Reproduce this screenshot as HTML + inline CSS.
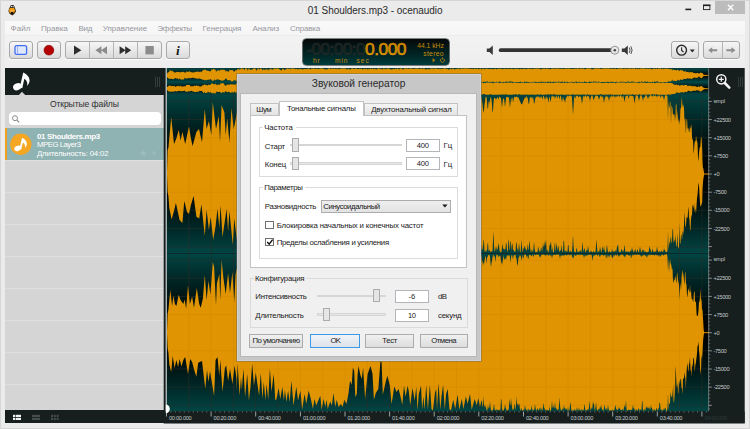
<!DOCTYPE html>
<html lang="ru"><head><meta charset="utf-8"><title>01 Shoulders.mp3 - ocenaudio</title>
<style>
html,body{margin:0;padding:0;}
body{width:750px;height:429px;position:relative;overflow:hidden;background:#ebebeb;font-family:'Liberation Sans',sans-serif;}
.t{position:absolute;white-space:nowrap;}
</style></head><body>
<div style="position:absolute;left:0px;top:0px;width:750px;height:429px;background:#ebebeb;"></div><div style="position:absolute;left:0px;top:0px;width:750px;height:429px;box-sizing:border-box;border:1px solid #d6d6d6;"></div><svg style="position:absolute;left:7px;top:4px" width="11" height="13" viewBox="7 4 11 13"><path d="M9.2 8.2l2-3.2 2.6 0.6 1.4 3 0.8 2.6-1.6 2.8-2.2 1.4-2.6-1.6-1.2-2.8z" fill="#3a2a10"/><ellipse cx="12" cy="10.6" rx="2.9" ry="3" fill="#f39c12"/><ellipse cx="12.2" cy="6.6" rx="2" ry="1.5" fill="#222"/><circle cx="11.4" cy="6.5" r="0.65" fill="#e8eef4"/><circle cx="13.1" cy="6.7" r="0.65" fill="#e8eef4"/><ellipse cx="12.1" cy="13" rx="1.5" ry="1.3" fill="#1a1208"/><path d="M10.8 11h2.6" stroke="#f8d9a0" stroke-width="0.6"/></svg><span class="t" style="left:307.80px;top:2.60px;font-size:10px;line-height:16px;color:#2a2a2a;font-family:'Liberation Sans',sans-serif;letter-spacing:-0.057px;">01 Shoulders.mp3 - ocenaudio</span><div style="position:absolute;left:715px;top:1px;width:30px;height:13px;background:#bcbcbc;"></div><svg style="position:absolute;left:680px;top:0" width="70" height="16" viewBox="680 0 70 16"><path d="M727.9 4.8l5.4 5.4M733.3 4.8l-5.4 5.4" stroke="#fff" stroke-width="1.3" fill="none"/><rect x="703.5" y="5.2" width="6.4" height="4.4" fill="none" stroke="#222" stroke-width="0.9"/><rect x="703" y="4.6" width="7.4" height="1.5" fill="#222"/><rect x="685.4" y="8.6" width="5.8" height="1.6" fill="#222"/></svg><div style="position:absolute;left:5px;top:20.6px;width:739.6px;height:14px;background:linear-gradient(#f9f9fa,#f5f5f6);"></div><span class="t" style="left:10.50px;top:21.70px;font-size:8px;line-height:13px;color:#98989e;font-family:'Liberation Sans',sans-serif;letter-spacing:0.108px;">Файл</span><span class="t" style="left:40.90px;top:21.70px;font-size:8px;line-height:13px;color:#98989e;font-family:'Liberation Sans',sans-serif;letter-spacing:-0.037px;">Правка</span><span class="t" style="left:78.40px;top:21.70px;font-size:8px;line-height:13px;color:#98989e;font-family:'Liberation Sans',sans-serif;letter-spacing:-0.224px;">Вид</span><span class="t" style="left:102.80px;top:21.70px;font-size:8px;line-height:13px;color:#98989e;font-family:'Liberation Sans',sans-serif;letter-spacing:-0.017px;">Управление</span><span class="t" style="left:157.40px;top:21.70px;font-size:8px;line-height:13px;color:#98989e;font-family:'Liberation Sans',sans-serif;letter-spacing:-0.281px;">Эффекты</span><span class="t" style="left:202.50px;top:21.70px;font-size:8px;line-height:13px;color:#98989e;font-family:'Liberation Sans',sans-serif;letter-spacing:-0.055px;">Генерация</span><span class="t" style="left:252.40px;top:21.70px;font-size:8px;line-height:13px;color:#98989e;font-family:'Liberation Sans',sans-serif;letter-spacing:-0.068px;">Анализ</span><span class="t" style="left:290.00px;top:21.70px;font-size:8px;line-height:13px;color:#98989e;font-family:'Liberation Sans',sans-serif;letter-spacing:-0.198px;">Справка</span><div style="position:absolute;left:5px;top:34.6px;width:739.6px;height:33.4px;background:linear-gradient(#e9e9e9,#f2f2f2 4%,#f0f0f0 50%,#ededed);"></div><div style="position:absolute;left:9px;top:41.4px;width:23.8px;height:17.4px;box-sizing:border-box;border:1px solid #a9a9a9;border-radius:3px;background:linear-gradient(#f6f6f6,#e9e9e9 50%,#dadada);box-shadow:0 1px 0 rgba(255,255,255,.8);"></div><div style="position:absolute;left:37px;top:41.4px;width:23.8px;height:17.4px;box-sizing:border-box;border:1px solid #a9a9a9;border-radius:3px;background:linear-gradient(#f6f6f6,#e9e9e9 50%,#dadada);box-shadow:0 1px 0 rgba(255,255,255,.8);"></div><div style="position:absolute;left:65.2px;top:41.4px;width:96.6px;height:17.4px;box-sizing:border-box;border:1px solid #a9a9a9;border-radius:3px;background:linear-gradient(#f6f6f6,#e9e9e9 50%,#dadada);box-shadow:0 1px 0 rgba(255,255,255,.8);"></div><div style="position:absolute;left:88.8px;top:42.4px;width:1px;height:15.4px;background:#b4b4b4;"></div><div style="position:absolute;left:113.0px;top:42.4px;width:1px;height:15.4px;background:#b4b4b4;"></div><div style="position:absolute;left:137.1px;top:42.4px;width:1px;height:15.4px;background:#b4b4b4;"></div><div style="position:absolute;left:166px;top:41.4px;width:23.6px;height:17.4px;box-sizing:border-box;border:1px solid #a9a9a9;border-radius:3px;background:linear-gradient(#f6f6f6,#e9e9e9 50%,#dadada);box-shadow:0 1px 0 rgba(255,255,255,.8);"></div><div style="position:absolute;left:671px;top:41.4px;width:27.6px;height:17.4px;box-sizing:border-box;border:1px solid #a9a9a9;border-radius:3px;background:linear-gradient(#f6f6f6,#e9e9e9 50%,#dadada);box-shadow:0 1px 0 rgba(255,255,255,.8);"></div><div style="position:absolute;left:703.2px;top:41.4px;width:37px;height:17.4px;box-sizing:border-box;border:1px solid #a9a9a9;border-radius:3px;background:linear-gradient(#f6f6f6,#e9e9e9 50%,#dadada);box-shadow:0 1px 0 rgba(255,255,255,.8);"></div><div style="position:absolute;left:722px;top:42.4px;width:1px;height:15.4px;background:#b4b4b4;"></div><svg style="position:absolute;left:0;top:36px" width="750" height="30" viewBox="0 36 750 30">
<rect x="15" y="45.6" width="11.6" height="8.8" rx="1.6" fill="#dfe8ff" stroke="#3f6df0" stroke-width="1.3"/><line x1="17.6" y1="46.5" x2="17.6" y2="53.5" stroke="#7f9df5" stroke-width="0.8"/>
<circle cx="48.9" cy="50.2" r="4.9" fill="#b40000"/><circle cx="48.9" cy="50.2" r="4.9" fill="none" stroke="#8a0000" stroke-width="0.6"/>
<path d="M74 45.6v9.2l7.4-4.6z" fill="#2e2e2e"/>
<path d="M101.4 46.2v8l-6-4zM107 46.2v8l-6-4z" fill="#8a8a8a"/>
<path d="M119.6 46.2v8l6-4zM125.2 46.2v8l6-4z" fill="#2e2e2e"/>
<rect x="145.4" y="46" width="8.4" height="8.4" fill="#8c8c8c"/>
<circle cx="681.6" cy="50.2" r="4.9" fill="none" stroke="#2a2a2a" stroke-width="1.4"/><path d="M681.6 47.2v3.2l2 1.6" fill="none" stroke="#2a2a2a" stroke-width="1.1"/>
<path d="M689.8 49.6h5l-2.5 2.8z" fill="#2a2a2a"/>
<path d="M708.2 50.2l4-3v2h5v2h-5v2z" fill="#8d8d8d"/>
<path d="M735.4 50.2l-4-3v2h-5v2h5v2z" fill="#8d8d8d"/>
<path d="M486.8 48.4h2.6l3.4-3v9.6l-3.4-3h-2.6z" fill="#3a3a3a"/>
<rect x="498.8" y="48.3" width="114.5" height="3.8" rx="1.9" fill="#333"/>
<circle cx="614.8" cy="50.2" r="4" fill="#e8e8e8" stroke="#8a8a8a" stroke-width="0.9"/><circle cx="614.8" cy="50.2" r="1.3" fill="#444"/>
<path d="M621.8 48.4h2.6l3.4-3v9.6l-3.4-3h-2.6z" fill="#3a3a3a"/><path d="M629.3 47.6q1.6 2.6 0 5.2M630.9 46.4q2.4 3.8 0 7.6" fill="none" stroke="#3a3a3a" stroke-width="0.9"/>
</svg><span class="t" style="left:175.92px;top:39.50px;font-size:13.5px;line-height:21px;color:#1a1a1a;font-family:'Liberation Serif',serif;font-weight:bold;font-style:italic;">i</span><div style="position:absolute;left:302.5px;top:38.7px;width:146px;height:26.3px;border-radius:3.5px;background:linear-gradient(#050808,#012222 55%,#013c3c);box-shadow:0 0 0 0.6px #0b1212;"></div><span class="t" style="left:306.40px;top:35.60px;font-size:17.4px;line-height:26px;color:#141c1a;font-family:'Liberation Sans',sans-serif;letter-spacing:-0.656px;-webkit-text-stroke:0.5px #2a3230;">-00:00:0</span><span class="t" style="left:365.00px;top:35.60px;font-size:17.4px;line-height:26px;color:#b87800;font-family:'Liberation Sans',sans-serif;letter-spacing:-0.509px;-webkit-text-stroke:0.55px #f5a500;">0.000</span><span class="t" style="left:313.00px;top:54.90px;font-size:6.6px;line-height:11px;color:#c88a08;font-family:'Liberation Sans',sans-serif;letter-spacing:0.816px;">hr</span><span class="t" style="left:335.00px;top:54.90px;font-size:6.6px;line-height:11px;color:#c88a08;font-family:'Liberation Sans',sans-serif;letter-spacing:0.955px;">min</span><span class="t" style="left:356.60px;top:54.90px;font-size:6.6px;line-height:11px;color:#c88a08;font-family:'Liberation Sans',sans-serif;letter-spacing:0.910px;">sec</span><span class="t" style="left:417.30px;top:40.00px;font-size:6.8px;line-height:12px;color:#c88a08;font-family:'Liberation Sans',sans-serif;letter-spacing:-0.042px;">44.1 kHz</span><span class="t" style="left:423.30px;top:47.60px;font-size:6.8px;line-height:12px;color:#c88a08;font-family:'Liberation Sans',sans-serif;letter-spacing:0.267px;">stereo</span><svg style="position:absolute;left:430px;top:56px" width="16" height="8" viewBox="430 56 16 8"><path d="M432.6 58v4.4l2.8-2.2z" fill="#b07808"/><path d="M441.4 58.6a2 2 0 1 0 2.2 0" fill="none" stroke="#b07808" stroke-width="0.9"/><path d="M442.5 57.4v2.2" stroke="#b07808" stroke-width="0.9"/></svg><div style="position:absolute;left:5.3px;top:68px;width:158.5px;height:355px;background:#d5d5d5;"></div><div style="position:absolute;left:5.3px;top:68px;width:158.5px;height:26.6px;background:#161e1e;"></div><div style="position:absolute;left:5.3px;top:410px;width:158.5px;height:13.3px;background:#161e1e;"></div><div style="position:absolute;left:5.3px;top:160.39999999999998px;width:158.5px;height:1px;background:#dfdfdf;"></div><div style="position:absolute;left:5.3px;top:192.39999999999998px;width:158.5px;height:1px;background:#dfdfdf;"></div><div style="position:absolute;left:5.3px;top:224.39999999999998px;width:158.5px;height:1px;background:#dfdfdf;"></div><div style="position:absolute;left:5.3px;top:256.4px;width:158.5px;height:1px;background:#dfdfdf;"></div><div style="position:absolute;left:5.3px;top:288.4px;width:158.5px;height:1px;background:#dfdfdf;"></div><div style="position:absolute;left:5.3px;top:320.4px;width:158.5px;height:1px;background:#dfdfdf;"></div><div style="position:absolute;left:5.3px;top:352.4px;width:158.5px;height:1px;background:#dfdfdf;"></div><div style="position:absolute;left:5.3px;top:384.4px;width:158.5px;height:1px;background:#dfdfdf;"></div><svg style="position:absolute;left:5px;top:68px" width="160" height="30" viewBox="5 68 160 30">
<path d="M18.6 95.2l3.4-3.4 3.4 3.4z" fill="#d5d5d5"/>
<g fill="#fff"><ellipse cx="17.4" cy="86.7" rx="4.5" ry="3.4" transform="rotate(-24 17.4 86.7)"/><path d="M23.2 72.6C25.2 73.4 29.7 76.4 29.6 80.6C29.5 82.8 28.5 84.7 27 86.1C27.8 83.4 27.2 80.6 24.3 78.8L22.3 88.2L19.8 87.4Z"/></g>
<g stroke="#343c3c" stroke-width="1"><line x1="155.5" y1="77" x2="155.5" y2="87"/><line x1="157.5" y1="77" x2="157.5" y2="87"/><line x1="159.5" y1="77" x2="159.5" y2="87"/></g>
</svg><span class="t" style="left:49.90px;top:97.00px;font-size:8.6px;line-height:14px;color:#303030;font-family:'Liberation Sans',sans-serif;letter-spacing:-0.108px;">Открытые файлы</span><div style="position:absolute;left:9px;top:112.3px;width:151.5px;height:13px;background:#fff;border-radius:4px;"></div><svg style="position:absolute;left:10px;top:113px" width="12" height="12" viewBox="10 113 12 12"><circle cx="15" cy="118.2" r="2.5" fill="none" stroke="#8c8c8c" stroke-width="1"/><line x1="16.9" y1="120.1" x2="19.2" y2="122.4" stroke="#8c8c8c" stroke-width="1.2"/></svg><div style="position:absolute;left:5.3px;top:128.4px;width:158.5px;height:31.6px;background:#8fb2b2;"></div><div style="position:absolute;left:5.3px;top:128.4px;width:1.9px;height:31.6px;background:#f0a020;"></div><svg style="position:absolute;left:8px;top:132px" width="26" height="26" viewBox="8 132 26 26" overflow="visible"><circle cx="20.8" cy="144.3" r="10.7" fill="#f5a623"/>
<g fill="#fff" transform="translate(17.6 148.4) scale(0.76) translate(-17.4 -86.7)"><ellipse cx="17.4" cy="86.7" rx="4.5" ry="3.4" transform="rotate(-24 17.4 86.7)"/><path d="M23.2 72.6C25.2 73.4 29.7 76.4 29.6 80.6C29.5 82.8 28.5 84.7 27 86.1C27.8 83.4 27.2 80.6 24.3 78.8L22.3 88.2L19.8 87.4Z"/></g></svg><span class="t" style="left:37.00px;top:129.90px;font-size:8.0px;line-height:13px;color:#fff;font-family:'Liberation Sans',sans-serif;letter-spacing:-0.382px;font-weight:bold;">01 Shoulders.mp3</span><span class="t" style="left:37.00px;top:138.10px;font-size:7.8px;line-height:13px;color:#fff;font-family:'Liberation Sans',sans-serif;letter-spacing:-0.499px;">MPEG Layer3</span><span class="t" style="left:37.00px;top:146.50px;font-size:7.8px;line-height:13px;color:#fff;font-family:'Liberation Sans',sans-serif;letter-spacing:-0.158px;">Длительность: 04:02</span><svg style="position:absolute;left:138px;top:148px" width="22" height="10" viewBox="138 148 22 10"><path d="M143.3 149.4l1.1 2.4 2.6 0.3-1.9 1.8 0.5 2.6-2.3-1.3-2.3 1.3 0.5-2.6-1.9-1.8 2.6-0.3z" fill="#9dbcbc"/><path d="M152.6 150.4v5l3.6-2.5z" fill="#9dbcbc"/></svg><svg style="position:absolute;left:10px;top:412px" width="52" height="10" viewBox="10 412 52 10">
<g fill="#f2f2f2"><rect x="13" y="414.8" width="2" height="2.2"/><rect x="15.6" y="414.8" width="5.4" height="2.2"/><rect x="13" y="417.8" width="2" height="2.2"/><rect x="15.6" y="417.8" width="5.4" height="2.2"/></g>
<g fill="#454c4c"><rect x="32" y="414.8" width="8" height="2.2"/><rect x="32" y="417.8" width="8" height="2.2"/>
<rect x="51" y="414.8" width="2" height="2.2"/><rect x="53.8" y="414.8" width="2" height="2.2"/><rect x="56.6" y="414.8" width="2" height="2.2"/><rect x="51" y="417.8" width="2" height="2.2"/><rect x="53.8" y="417.8" width="2" height="2.2"/><rect x="56.6" y="417.8" width="2" height="2.2"/></g></svg><svg id="wave" width="750" height="429" viewBox="0 0 750 429" style="position:absolute;left:0;top:0">
<defs>
<linearGradient id="gch" x1="0" y1="0" x2="0" y2="1"><stop offset="0.00" stop-color="#004644"/><stop offset="0.05" stop-color="#003c3a"/><stop offset="0.10" stop-color="#003231"/><stop offset="0.15" stop-color="#002928"/><stop offset="0.20" stop-color="#002120"/><stop offset="0.25" stop-color="#001918"/><stop offset="0.30" stop-color="#001211"/><stop offset="0.35" stop-color="#000c0b"/><stop offset="0.40" stop-color="#000606"/><stop offset="0.45" stop-color="#000202"/><stop offset="0.50" stop-color="#000000"/><stop offset="0.55" stop-color="#000202"/><stop offset="0.60" stop-color="#000606"/><stop offset="0.65" stop-color="#000c0b"/><stop offset="0.70" stop-color="#001211"/><stop offset="0.75" stop-color="#001918"/><stop offset="0.80" stop-color="#002120"/><stop offset="0.85" stop-color="#002928"/><stop offset="0.90" stop-color="#003231"/><stop offset="0.95" stop-color="#003c3a"/><stop offset="1.00" stop-color="#004644"/></linearGradient>
<linearGradient id="gch2" x1="0" y1="0" x2="0" y2="1"><stop offset="0.00" stop-color="#004644"/><stop offset="0.05" stop-color="#003c3a"/><stop offset="0.10" stop-color="#003231"/><stop offset="0.15" stop-color="#002928"/><stop offset="0.20" stop-color="#002120"/><stop offset="0.25" stop-color="#001918"/><stop offset="0.30" stop-color="#001211"/><stop offset="0.35" stop-color="#000c0b"/><stop offset="0.40" stop-color="#000606"/><stop offset="0.45" stop-color="#000202"/><stop offset="0.50" stop-color="#000000"/><stop offset="0.55" stop-color="#000202"/><stop offset="0.60" stop-color="#000606"/><stop offset="0.65" stop-color="#000c0b"/><stop offset="0.70" stop-color="#001211"/><stop offset="0.75" stop-color="#001918"/><stop offset="0.80" stop-color="#002120"/><stop offset="0.85" stop-color="#002928"/><stop offset="0.90" stop-color="#003231"/><stop offset="0.95" stop-color="#003c3a"/><stop offset="1.00" stop-color="#004644"/></linearGradient>
<linearGradient id="gov" x1="0" y1="0" x2="0" y2="1"><stop offset="0.00" stop-color="#004c4a"/><stop offset="0.05" stop-color="#004442"/><stop offset="0.10" stop-color="#003d3b"/><stop offset="0.15" stop-color="#003534"/><stop offset="0.20" stop-color="#002e2c"/><stop offset="0.25" stop-color="#002625"/><stop offset="0.30" stop-color="#001e1d"/><stop offset="0.35" stop-color="#001716"/><stop offset="0.40" stop-color="#000f0f"/><stop offset="0.45" stop-color="#000807"/><stop offset="0.50" stop-color="#000000"/><stop offset="0.55" stop-color="#000807"/><stop offset="0.60" stop-color="#000f0f"/><stop offset="0.65" stop-color="#001716"/><stop offset="0.70" stop-color="#001e1d"/><stop offset="0.75" stop-color="#002625"/><stop offset="0.80" stop-color="#002e2c"/><stop offset="0.85" stop-color="#003534"/><stop offset="0.90" stop-color="#003d3b"/><stop offset="0.95" stop-color="#004442"/><stop offset="1.00" stop-color="#004c4a"/></linearGradient>
</defs>
<rect x="163.7" y="68" width="581" height="355.3" fill="#161e1e"/>
<rect x="167" y="68.3" width="541.6" height="13.7" fill="url(#gov)"/><rect x="167" y="82" width="541.6" height="12.6" fill="url(#gov)"/>
<rect x="167" y="94.5" width="542" height="159" fill="url(#gch)"/>
<rect x="167" y="253.5" width="542" height="158" fill="url(#gch2)"/>
<g stroke="#2c3030" stroke-width="0.9" opacity="0.55"><line x1="188.8" y1="94.5" x2="188.8" y2="411.5"/><line x1="211.1" y1="94.5" x2="211.1" y2="411.5"/><line x1="233.4" y1="94.5" x2="233.4" y2="411.5"/><line x1="255.7" y1="94.5" x2="255.7" y2="411.5"/><line x1="278.1" y1="94.5" x2="278.1" y2="411.5"/><line x1="300.4" y1="94.5" x2="300.4" y2="411.5"/><line x1="322.7" y1="94.5" x2="322.7" y2="411.5"/><line x1="345.0" y1="94.5" x2="345.0" y2="411.5"/><line x1="367.3" y1="94.5" x2="367.3" y2="411.5"/><line x1="389.6" y1="94.5" x2="389.6" y2="411.5"/><line x1="411.9" y1="94.5" x2="411.9" y2="411.5"/><line x1="434.2" y1="94.5" x2="434.2" y2="411.5"/><line x1="456.5" y1="94.5" x2="456.5" y2="411.5"/><line x1="478.8" y1="94.5" x2="478.8" y2="411.5"/><line x1="501.1" y1="94.5" x2="501.1" y2="411.5"/><line x1="523.5" y1="94.5" x2="523.5" y2="411.5"/><line x1="545.8" y1="94.5" x2="545.8" y2="411.5"/><line x1="568.1" y1="94.5" x2="568.1" y2="411.5"/><line x1="590.4" y1="94.5" x2="590.4" y2="411.5"/><line x1="612.7" y1="94.5" x2="612.7" y2="411.5"/><line x1="635.0" y1="94.5" x2="635.0" y2="411.5"/><line x1="657.3" y1="94.5" x2="657.3" y2="411.5"/><line x1="679.6" y1="94.5" x2="679.6" y2="411.5"/><line x1="701.9" y1="94.5" x2="701.9" y2="411.5"/><line x1="167" y1="101.4" x2="709" y2="101.4"/><line x1="167" y1="119.6" x2="709" y2="119.6"/><line x1="167" y1="137.7" x2="709" y2="137.7"/><line x1="167" y1="155.8" x2="709" y2="155.8"/><line x1="167" y1="192.2" x2="709" y2="192.2"/><line x1="167" y1="210.3" x2="709" y2="210.3"/><line x1="167" y1="228.4" x2="709" y2="228.4"/><line x1="167" y1="246.6" x2="709" y2="246.6"/><line x1="167" y1="260.1" x2="709" y2="260.1"/><line x1="167" y1="278.2" x2="709" y2="278.2"/><line x1="167" y1="296.4" x2="709" y2="296.4"/><line x1="167" y1="314.6" x2="709" y2="314.6"/><line x1="167" y1="350.8" x2="709" y2="350.8"/><line x1="167" y1="369.0" x2="709" y2="369.0"/><line x1="167" y1="387.1" x2="709" y2="387.1"/><line x1="167" y1="405.3" x2="709" y2="405.3"/></g>
<line x1="167" y1="75.3" x2="708.4" y2="75.3" stroke="#e19401" stroke-width="0.9"/><line x1="167" y1="88.7" x2="708.4" y2="88.7" stroke="#e19401" stroke-width="0.9"/><path d="M167.0,73.6 167.5,73.3 167.6,72.5 168.0,72.2 168.4,72.5 168.5,71.9 169.0,72.1 169.3,71.6 169.5,70.6 171.2,70.4 171.5,71.5 171.6,71.1 172.0,71.1 172.1,70.8 172.7,70.7 173.0,72.3 173.4,71.9 173.5,71.5 174.5,71.9 174.9,73.2 175.0,72.8 175.9,72.2 176.0,71.9 176.4,71.8 176.5,72.2 178.5,71.7 178.7,71.9 179.0,71.7 179.5,72.5 179.6,72.1 180.0,72.3 180.5,72.1 180.6,72.8 181.5,71.7 182.0,71.7 182.4,72.1 183.5,71.7 184.5,72.0 184.6,72.9 185.5,72.2 186.0,72.8 186.1,72.2 186.5,71.4 187.0,71.2 187.5,71.9 189.9,71.2 190.0,71.4 190.2,71.4 190.5,72.3 191.5,72.1 192.1,72.5 192.5,72.3 193.0,72.7 193.5,72.4 193.6,72.0 194.0,71.8 194.5,72.5 195.5,71.7 196.0,71.6 196.4,72.0 196.5,71.8 196.8,72.1 197.5,71.4 198.5,71.4 199.0,72.4 199.2,72.0 200.0,71.8 200.1,71.4 200.5,71.5 200.7,72.1 201.4,72.2 201.5,71.9 202.0,71.0 202.5,70.5 202.9,71.3 203.0,70.5 203.5,69.7 206.0,69.7 206.5,70.8 207.0,70.5 207.5,70.8 208.5,70.8 208.9,71.0 209.0,70.9 209.5,71.4 210.0,71.2 210.4,71.2 210.5,71.1 210.7,71.5 211.0,70.3 211.5,69.6 212.5,69.4 212.8,70.2 213.2,69.1 214.0,69.1 215.6,70.1 216.0,71.6 216.5,71.4 217.0,70.4 218.8,70.3 219.0,70.5 219.3,70.4 219.5,70.8 220.0,70.6 220.3,69.9 220.5,69.6 220.6,69.7 221.0,69.6 221.5,70.6 221.6,70.1 223.0,69.4 223.4,69.4 223.5,70.2 224.7,69.8 224.9,69.9 225.0,70.4 225.5,70.4 225.7,71.7 226.0,71.4 226.2,70.5 226.5,70.5 226.6,71.5 227.0,71.1 227.2,71.5 227.5,71.1 228.0,71.3 228.1,71.0 228.5,71.9 229.0,71.6 229.4,70.3 229.5,69.6 230.0,70.0 230.5,69.9 231.0,70.3 231.5,70.0 232.0,70.2 232.4,70.0 232.5,69.7 232.8,69.7 233.0,71.6 233.5,71.2 233.7,70.5 234.0,70.7 234.3,71.9 234.5,71.4 234.6,71.8 235.6,70.0 236.0,70.1 236.5,69.9 236.8,71.0 237.0,70.1 237.5,69.2 238.0,68.9 239.5,69.0 239.6,70.3 240.0,70.3 240.5,68.6 242.5,68.5 243.0,69.4 243.4,69.4 243.5,68.5 244.0,68.5 244.5,69.9 245.0,69.9 245.1,68.5 247.2,68.5 247.5,70.4 248.0,70.4 248.5,68.5 249.5,68.5 250.0,69.9 250.5,69.9 251.0,69.4 251.5,69.4 252.0,70.0 252.2,70.0 252.5,69.1 253.0,69.1 253.5,68.5 255.5,68.5 255.8,69.8 256.0,69.8 256.5,70.4 257.0,70.4 257.5,68.5 258.0,68.5 258.5,68.8 259.0,68.8 259.1,69.8 259.5,69.8 260.0,68.5 261.0,68.5 261.5,69.0 262.0,69.0 262.4,70.4 263.0,69.7 263.5,69.7 263.8,68.5 264.0,68.5 264.5,70.1 265.5,70.0 266.0,68.6 266.5,68.6 266.6,69.7 267.0,69.7 267.5,69.4 268.0,69.4 268.2,70.2 268.5,70.2 269.0,68.9 269.5,68.9 269.9,70.3 270.0,70.3 270.5,68.5 271.0,68.5 271.5,69.2 272.0,69.2 272.5,69.8 273.0,69.8 273.5,68.5 275.3,68.5 275.5,69.1 276.0,69.1 276.5,68.5 278.6,68.5 279.0,69.3 279.5,69.3 280.3,69.5 280.5,70.3 282.0,70.3 282.3,68.5 282.5,68.5 283.0,69.0 284.0,69.2 284.5,70.2 284.9,70.2 285.0,69.4 286.4,69.3 286.5,68.5 288.0,68.5 288.1,69.1 288.5,69.1 289.0,68.5 290.0,68.5 290.5,69.2 291.0,69.2 291.4,68.5 293.5,68.5 294.5,68.7 295.0,69.2 295.5,69.2 296.0,68.7 297.0,68.9 297.5,69.2 299.0,69.3 299.5,68.8 300.0,68.8 300.5,69.3 301.0,69.3 301.5,68.9 302.0,68.9 302.1,69.6 304.5,69.1 304.6,68.9 305.0,68.9 305.5,69.2 306.0,69.2 306.2,68.8 306.5,68.8 307.0,69.2 307.5,69.2 308.0,68.6 309.0,68.5 309.5,69.0 310.0,69.0 310.5,69.4 311.0,69.4 311.2,68.6 312.5,68.8 313.0,68.5 316.5,68.9 317.0,68.5 317.5,68.5 318.0,69.1 318.5,69.1 318.6,69.3 319.0,69.3 319.5,68.5 323.0,68.5 323.6,69.1 324.5,68.9 325.0,69.3 325.3,69.3 325.5,69.6 326.0,69.6 326.6,69.3 327.5,69.5 327.7,68.5 330.0,68.5 330.2,69.0 333.0,68.5 333.5,68.9 334.0,68.9 334.5,68.5 335.0,68.5 335.2,68.9 335.5,68.9 336.0,68.5 336.5,68.5 336.8,69.5 337.0,69.5 337.5,68.5 338.0,68.5 338.5,68.9 339.0,68.9 339.5,69.2 340.0,69.2 340.5,68.5 346.0,68.5 346.4,69.3 347.5,69.5 348.0,68.5 348.4,68.5 348.5,68.7 349.0,68.7 349.5,69.6 350.0,69.6 350.5,69.3 351.0,69.3 351.5,68.5 353.0,68.5 353.5,68.9 354.5,68.9 355.0,68.5 356.8,68.5 357.0,69.3 358.5,69.1 359.0,68.8 359.5,68.8 360.1,68.5 360.5,69.1 361.0,69.1 361.5,68.6 361.8,68.6 362.0,69.6 362.5,69.6 363.5,68.8 364.0,68.8 364.5,69.1 365.5,69.2 366.0,68.5 366.5,68.5 367.0,69.3 367.5,69.3 367.6,69.5 368.0,69.5 368.5,68.8 369.0,68.8 369.5,69.3 370.0,69.3 370.5,68.5 371.0,68.5 371.5,69.1 372.0,69.1 372.5,68.5 373.0,68.5 373.5,69.4 373.9,69.4 374.0,68.5 374.5,68.5 375.0,69.3 375.5,69.3 375.8,68.7 376.0,68.7 376.5,69.6 377.0,69.6 377.5,68.5 379.5,68.5 380.0,68.9 380.5,68.9 381.0,68.5 381.5,68.5 381.6,69.3 382.8,69.4 383.0,68.5 384.5,68.5 385.0,69.5 385.5,69.5 385.8,68.5 386.0,68.5 386.5,69.0 387.0,69.0 387.5,68.5 388.5,68.5 389.0,68.9 389.5,68.9 390.0,68.6 390.5,69.5 392.0,69.4 393.0,69.0 393.5,69.0 395.0,69.3 395.5,68.5 396.0,68.5 396.5,69.3 397.0,69.3 397.5,68.5 398.0,68.5 398.6,68.8 399.0,69.5 399.5,69.5 400.0,68.5 402.0,68.6 402.3,69.2 403.0,69.6 403.5,69.6 404.0,68.5 407.6,68.5 408.0,68.9 408.5,68.9 409.0,68.5 410.5,68.5 413.5,68.7 414.0,68.9 415.0,68.8 415.5,68.5 417.5,68.6 418.5,68.5 418.8,69.1 420.0,68.9 420.5,68.5 422.0,68.5 422.1,69.2 422.5,69.2 423.0,68.5 424.6,68.5 425.0,69.3 426.2,69.6 426.5,69.2 427.0,69.2 427.5,68.8 427.9,68.8 428.0,69.1 428.5,69.1 429.0,69.5 430.0,69.3 430.5,68.5 432.9,68.5 433.0,69.2 433.5,69.2 434.0,68.5 435.5,68.5 436.2,68.8 436.5,68.5 437.0,68.5 437.5,68.9 438.6,68.9 439.0,68.5 439.5,68.5 440.0,69.5 440.3,69.5 440.5,68.5 441.0,68.5 441.6,69.0 442.5,69.0 443.1,68.5 446.1,68.5 446.5,69.3 447.0,69.3 447.5,68.5 447.7,68.5 448.0,69.5 449.4,69.4 449.5,69.2 450.0,69.2 450.5,68.5 451.0,68.5 451.5,69.5 452.0,69.5 452.5,68.6 453.5,68.5 454.0,69.6 454.5,69.6 455.0,69.1 456.0,69.2 456.5,68.8 457.0,68.8 457.6,69.3 458.0,68.5 459.3,68.5 459.5,69.5 460.0,69.5 460.5,68.5 462.5,68.5 463.0,69.1 463.4,69.1 463.5,68.5 467.5,68.5 467.6,68.8 469.0,68.6 470.0,68.8 470.5,69.1 472.5,68.8 473.0,69.3 473.5,69.3 474.0,68.5 475.0,68.5 475.5,69.3 476.0,69.3 476.5,68.5 477.0,68.8 477.5,68.8 478.3,68.5 478.5,69.4 479.0,69.4 479.5,68.7 481.0,68.5 481.5,69.8 482.0,69.5 482.5,68.5 484.0,68.7 484.5,69.4 485.5,68.7 488.0,68.7 488.5,69.0 489.0,68.9 489.5,69.3 491.0,68.8 491.5,69.2 492.0,69.0 493.0,69.0 493.5,69.5 494.5,68.8 496.0,68.8 496.5,69.5 497.5,68.7 502.0,68.7 502.5,69.5 503.5,68.8 506.0,68.7 506.5,69.3 507.5,68.8 509.0,68.7 509.5,69.3 510.5,68.7 512.0,68.7 512.5,69.0 513.0,68.8 513.5,69.4 514.5,68.7 517.0,68.7 517.5,69.1 518.5,68.7 519.0,68.7 519.5,69.4 520.5,68.8 522.0,68.9 522.5,69.3 523.5,68.7 524.0,68.6 524.5,69.1 525.5,68.7 526.0,68.7 526.5,69.4 527.5,68.6 530.0,68.7 530.5,69.3 531.5,68.6 532.0,68.6 532.5,69.2 533.5,68.7 535.0,68.6 535.5,68.8 537.0,68.6 539.0,68.7 540.0,68.6 540.5,69.4 541.0,69.1 541.5,69.4 542.5,68.6 543.5,68.8 545.0,68.6 545.5,69.2 546.5,68.6 548.0,68.6 548.5,69.2 550.0,68.7 550.5,69.4 551.5,68.6 553.0,68.6 553.5,68.8 559.0,68.6 559.5,69.1 561.0,68.7 563.0,68.7 563.5,69.2 564.5,68.7 566.0,68.6 566.5,68.8 570.0,68.6 570.5,68.9 579.0,68.6 579.5,69.3 580.5,68.6 582.0,68.6 582.5,69.0 583.5,68.6 584.0,68.6 584.5,69.4 585.0,69.1 585.5,69.3 586.5,68.6 591.0,68.6 591.5,69.4 592.0,69.0 592.5,69.4 594.5,68.6 600.0,68.6 600.5,68.9 601.0,68.8 601.5,69.2 602.5,68.6 610.0,68.6 610.5,68.9 613.0,68.6 613.5,69.1 616.0,68.6 616.5,69.3 618.5,68.6 623.0,68.6 623.5,69.2 624.5,68.6 625.0,68.6 625.5,69.0 626.5,68.6 627.0,68.6 627.5,68.9 628.5,68.6 631.0,68.6 631.5,69.1 632.5,68.6 635.0,68.6 635.5,69.2 636.5,68.6 637.0,68.6 637.5,69.2 638.5,68.6 639.0,68.6 639.5,69.2 640.5,68.6 645.0,68.6 645.5,68.8 646.0,68.7 646.5,69.0 647.5,68.6 648.0,68.5 648.5,69.1 649.5,68.5 650.0,68.5 650.5,69.0 651.0,68.8 651.5,69.2 652.0,68.9 652.5,69.4 653.5,68.5 655.0,68.5 655.5,69.3 656.5,68.5 657.0,68.5 657.5,69.2 658.5,68.5 661.0,68.5 661.5,69.4 662.5,68.6 663.0,68.6 663.5,69.2 664.5,68.7 667.5,68.5 667.7,69.0 668.7,68.8 669.0,69.3 670.0,68.8 671.0,69.4 672.0,69.1 672.4,69.3 672.5,70.5 673.5,69.7 674.0,69.8 674.3,70.2 674.5,69.8 675.0,70.0 675.5,69.9 675.7,70.1 676.0,69.9 676.1,71.0 677.0,69.8 678.5,70.1 679.0,71.2 679.8,70.4 680.2,69.7 680.5,69.8 681.0,70.5 682.6,70.0 683.0,71.2 683.5,70.9 684.0,72.0 684.5,71.4 685.0,70.6 685.5,70.9 686.0,72.1 687.3,71.8 687.5,72.0 688.0,71.9 688.2,71.6 688.5,71.8 688.6,72.5 691.0,71.9 691.5,72.4 692.0,72.2 692.5,72.3 692.9,72.1 693.0,71.9 693.5,73.4 694.0,73.0 694.5,73.0 694.7,72.7 695.0,72.7 695.5,73.5 695.7,73.2 696.0,73.4 696.5,73.1 696.6,73.3 697.5,72.7 698.5,73.2 699.0,73.8 700.0,72.9 700.4,72.4 700.5,72.8 701.0,72.5 701.3,73.1 701.5,72.8 702.0,73.2 702.5,73.1 703.2,74.1 703.5,74.9 703.7,74.5 704.0,74.9 709.0,75.3 L709.0,75.3 704.5,75.7 703.7,76.2 703.5,75.7 703.0,76.8 701.5,78.2 700.5,77.9 700.3,77.3 700.0,77.5 699.5,76.9 699.0,76.6 698.5,76.8 697.5,77.9 696.6,77.6 696.5,77.9 695.5,77.9 694.7,77.2 694.5,77.6 694.0,77.4 693.8,77.9 693.0,77.8 692.9,78.1 692.0,79.1 691.5,79.1 690.0,78.5 689.5,78.2 689.0,79.1 688.6,79.1 688.2,77.9 687.5,78.0 687.3,78.8 685.5,78.9 685.4,79.1 684.5,78.9 684.0,78.6 683.5,79.6 683.0,79.5 682.6,79.7 682.5,79.6 682.0,79.9 681.7,79.8 681.5,80.1 681.0,80.1 680.2,79.1 680.0,80.6 679.0,80.4 678.0,79.6 677.5,80.5 677.0,80.2 676.5,81.2 676.1,81.2 676.0,81.1 675.0,81.1 674.3,80.4 674.0,81.0 673.5,81.0 673.0,80.1 672.5,79.5 672.4,81.2 672.0,81.3 671.5,80.8 671.0,80.6 670.5,81.8 670.0,81.8 668.5,81.2 668.0,81.7 667.7,81.5 667.5,82.0 658.5,82.0 657.5,81.2 657.0,81.6 656.5,81.3 656.0,82.0 655.5,82.0 654.5,81.3 654.0,82.0 652.5,81.7 652.0,82.0 648.5,82.0 647.5,81.5 647.0,82.0 646.5,82.0 645.5,81.2 645.0,81.8 644.5,81.6 644.0,82.0 643.0,81.9 641.5,81.3 641.0,82.0 639.5,81.8 639.0,82.0 637.5,81.8 637.0,82.0 634.5,82.0 633.5,81.6 633.0,81.7 632.5,81.5 632.0,81.6 631.5,81.3 631.0,82.0 629.5,82.0 628.5,81.5 628.0,81.6 627.5,81.3 627.0,82.0 624.5,82.0 623.5,81.4 623.0,82.0 622.5,82.0 621.5,81.6 621.0,81.7 620.5,81.5 620.0,82.0 617.5,82.0 616.5,81.6 616.0,81.9 613.5,82.0 612.5,81.4 612.0,82.0 611.5,82.0 610.5,81.4 610.0,82.0 606.5,81.8 606.0,82.0 599.5,82.0 598.5,81.2 598.0,82.0 594.5,81.5 594.0,81.6 593.5,81.3 593.0,82.0 592.5,82.0 591.5,81.4 591.0,82.0 590.5,82.0 589.5,81.3 589.0,82.0 585.5,82.0 584.5,81.2 584.0,82.0 580.5,82.0 579.5,81.6 579.0,82.0 577.5,82.0 576.5,81.4 576.0,81.7 575.5,81.5 575.0,82.0 572.5,82.0 571.5,81.4 571.0,82.0 567.5,82.0 566.5,81.4 566.0,82.0 565.5,82.0 564.5,81.6 564.0,82.0 563.5,82.0 562.5,81.5 562.0,81.8 561.5,81.6 561.0,82.0 559.5,82.0 558.5,81.1 558.0,82.0 556.5,82.0 555.5,81.2 555.0,82.0 554.5,82.0 553.5,81.6 553.0,82.0 551.5,82.0 550.5,81.5 550.0,81.7 549.5,81.6 549.0,82.0 548.5,82.0 547.5,81.4 547.0,81.9 546.5,81.8 546.0,82.0 544.5,81.8 544.0,82.0 541.5,81.6 541.0,82.0 539.5,81.7 539.0,82.0 535.5,82.0 534.5,81.6 534.0,82.0 532.5,81.8 532.0,82.0 527.5,81.9 526.5,81.5 526.0,81.9 524.5,81.6 524.0,82.0 521.5,82.0 520.5,81.4 520.0,82.0 513.5,82.0 513.0,81.8 512.0,81.7 511.5,81.5 511.0,81.6 510.5,81.3 510.0,81.5 509.5,81.2 509.0,81.9 507.5,81.5 507.0,81.8 506.5,81.6 506.0,81.8 505.5,81.6 505.0,81.9 503.5,82.0 502.5,81.7 502.0,82.0 500.5,82.0 499.5,81.2 499.0,82.0 497.5,82.0 496.5,81.5 496.0,82.0 494.0,82.0 492.5,81.6 492.0,82.0 491.5,82.0 490.5,81.6 490.0,82.0 488.5,82.0 487.5,81.2 487.0,81.6 486.5,81.4 486.0,82.0 485.5,82.0 484.5,81.5 484.0,81.8 482.5,81.9 481.5,81.4 481.0,82.0 237.6,82.0 237.0,81.1 236.8,80.6 236.5,81.2 236.0,81.2 235.6,80.5 235.5,80.1 235.0,80.7 234.6,80.3 234.5,79.6 234.3,79.7 234.0,80.7 233.7,80.3 233.5,80.9 233.0,80.6 232.8,81.4 231.5,81.4 231.0,81.1 230.0,79.9 229.5,80.2 227.2,80.2 227.0,79.7 226.6,79.2 226.5,78.7 226.2,78.1 226.0,78.9 225.7,78.8 225.5,79.1 225.0,78.8 224.9,79.8 224.7,80.1 224.4,79.7 224.0,80.4 223.5,80.2 223.4,80.5 223.0,80.3 222.5,80.7 221.0,80.7 220.6,80.0 219.0,79.9 218.8,79.6 218.5,79.3 218.0,79.6 217.5,79.2 217.0,79.8 216.0,79.4 215.6,80.5 215.5,80.5 214.5,79.3 214.1,80.6 214.0,80.3 213.5,80.8 213.2,80.6 213.0,81.0 212.0,80.5 211.5,80.1 211.3,79.5 211.0,79.5 210.7,78.7 210.5,79.5 210.4,79.1 210.0,79.8 209.0,79.5 208.9,79.1 208.5,80.1 207.0,79.8 206.6,80.0 206.5,80.4 205.5,79.8 205.3,80.6 205.0,80.6 203.5,79.6 203.0,79.9 202.9,79.2 202.5,80.0 201.0,78.8 200.1,79.0 200.0,78.5 199.5,78.1 199.2,79.0 198.2,78.4 198.0,78.8 197.5,78.5 197.0,79.1 196.8,79.1 196.5,78.4 196.4,78.0 196.0,78.4 195.5,78.0 195.0,78.4 194.5,78.0 194.0,78.3 193.6,77.7 193.5,78.0 193.0,77.6 192.0,78.1 191.0,77.8 190.8,78.4 190.5,78.5 190.0,77.8 189.9,78.2 189.5,77.9 189.0,78.2 188.5,77.8 188.0,78.4 187.5,78.2 187.0,78.7 186.5,78.7 186.1,78.2 186.0,77.9 185.5,78.6 185.2,78.4 185.0,77.7 184.6,77.5 184.5,78.6 184.0,79.4 180.6,79.5 180.5,79.3 180.0,79.2 179.6,78.6 179.5,78.1 179.0,79.2 178.1,79.2 178.0,78.6 177.5,78.3 177.0,78.8 176.5,78.7 176.4,78.4 175.5,77.9 174.9,78.6 174.5,78.3 174.0,78.9 172.5,79.2 172.0,78.7 171.6,79.1 171.0,78.5 170.5,79.0 170.3,78.8 170.0,79.0 168.5,78.5 168.4,78.2 168.0,78.2 167.6,77.9 167.5,77.3 167.0,77.2Z" fill="#e19401"/>
<path d="M167.0,87.2 168.4,86.1 168.5,85.6 169.0,86.2 169.5,85.6 170.5,85.4 171.0,86.2 171.2,85.9 171.5,86.0 171.6,85.9 172.0,86.4 172.1,86.1 172.7,85.8 173.0,86.5 173.4,86.2 173.5,85.9 174.6,85.8 175.5,86.9 176.0,86.7 176.4,86.4 176.5,86.0 178.5,85.7 178.7,86.4 179.0,86.2 179.5,86.6 179.6,86.2 180.0,85.7 180.5,85.8 180.6,86.0 181.0,86.0 181.5,86.8 182.0,86.6 182.4,86.6 182.5,86.5 183.0,86.6 184.0,86.3 184.3,86.6 184.5,86.4 184.6,86.1 185.0,86.1 185.2,86.8 186.0,85.5 186.1,85.0 189.9,85.0 190.0,85.4 190.5,86.5 190.8,86.2 191.0,86.6 192.1,86.0 192.5,86.6 192.6,86.3 193.0,85.9 193.5,85.9 193.6,86.6 194.5,85.6 195.0,85.5 195.5,86.0 196.0,85.7 196.5,85.2 196.8,85.8 197.0,85.6 197.5,86.0 198.0,85.7 198.2,86.1 199.0,85.6 199.2,85.8 199.5,86.8 200.1,86.4 200.5,86.5 201.0,86.2 201.4,86.4 202.5,85.1 202.9,85.6 203.0,84.9 203.5,85.5 204.0,85.0 204.5,84.2 204.8,84.2 205.0,84.8 205.3,84.6 205.5,85.1 206.0,84.7 206.5,85.1 206.6,85.1 207.0,85.8 207.5,85.3 209.0,84.6 209.5,85.0 210.4,84.8 210.5,84.6 210.7,84.8 211.0,84.0 212.0,83.2 212.5,83.2 212.8,84.2 213.0,83.8 213.2,84.2 213.5,83.8 214.0,84.3 214.1,83.9 214.5,84.4 215.6,83.5 216.0,84.3 216.5,84.6 216.9,85.6 217.0,85.0 218.0,84.5 218.5,84.6 218.8,84.4 219.0,84.5 219.3,84.4 219.5,84.9 220.0,84.6 220.5,83.4 220.6,83.0 221.0,83.0 221.5,84.0 221.6,83.6 222.0,83.0 222.5,83.0 223.0,83.4 223.5,83.3 224.0,83.7 224.5,84.6 224.7,85.4 225.5,85.2 225.7,86.0 226.0,85.4 226.2,85.7 226.5,85.1 226.6,84.6 227.0,84.3 227.2,85.3 227.5,84.8 228.1,84.2 228.5,84.8 229.0,84.5 229.4,85.2 229.5,84.7 230.5,84.0 231.0,84.4 232.4,84.0 232.5,85.1 233.0,84.1 233.5,84.1 233.7,85.2 234.3,84.7 234.5,84.4 234.6,84.6 235.0,84.2 235.5,85.1 235.6,84.5 236.0,83.4 236.8,83.2 237.5,82.8 237.6,82.6 483.0,82.6 483.5,83.4 484.5,82.7 485.0,82.7 485.5,83.3 486.5,82.6 489.0,82.6 489.5,82.8 492.0,82.6 492.5,83.2 493.0,83.0 493.5,83.3 494.5,82.6 499.0,82.6 499.5,83.2 501.5,82.6 503.0,82.6 503.5,83.3 504.5,82.6 506.0,82.8 509.0,82.6 509.5,82.8 512.0,82.6 512.5,83.2 513.5,82.6 516.0,82.6 516.5,83.1 517.5,82.6 518.5,82.9 519.0,82.8 519.5,83.1 523.0,82.6 524.0,82.6 524.5,83.4 525.5,82.6 526.0,82.6 526.5,83.0 528.0,82.7 528.5,83.1 529.5,82.6 535.0,82.6 535.5,82.9 538.0,82.6 538.5,83.2 539.5,82.6 540.0,82.6 540.5,82.9 543.0,82.6 543.5,83.1 544.5,82.6 545.0,82.6 545.5,83.0 546.5,82.6 547.0,82.6 547.5,82.9 548.0,82.8 548.5,83.3 549.5,82.6 550.0,82.6 550.5,83.3 551.5,82.6 552.0,82.6 552.5,82.9 553.0,82.8 553.5,83.2 554.5,82.6 560.0,82.6 560.5,83.0 564.0,82.6 564.5,83.3 565.5,82.6 567.0,82.6 567.5,83.2 568.5,82.6 573.0,82.6 573.5,83.2 574.5,82.6 576.0,82.6 576.5,83.2 577.5,82.6 578.0,82.6 578.5,82.8 581.0,82.6 582.0,82.7 582.5,83.1 583.5,82.6 584.0,82.6 584.5,82.9 589.0,82.6 589.5,83.2 590.0,82.9 590.5,83.1 591.5,82.6 601.0,82.6 601.5,83.2 603.0,82.7 603.5,83.1 607.0,82.6 607.5,83.1 608.0,82.9 608.5,83.3 609.5,82.6 611.0,82.7 611.5,83.0 613.0,82.7 613.5,82.8 615.0,82.6 615.5,83.4 616.5,82.6 625.0,82.6 625.5,83.2 626.5,82.6 628.0,82.6 628.5,82.8 633.0,82.6 638.0,82.6 638.5,83.3 640.5,82.6 642.5,82.6 643.0,82.9 645.0,82.6 645.5,82.9 646.0,82.7 646.5,83.0 647.0,82.8 647.5,83.0 648.5,82.6 649.0,82.6 649.5,83.0 652.0,82.6 652.5,83.3 653.5,82.6 654.0,82.6 654.5,83.3 655.0,83.0 655.5,83.2 656.5,82.6 657.0,82.6 657.5,83.1 658.5,82.6 660.0,82.6 660.5,83.2 661.5,82.6 664.0,82.6 664.5,83.0 665.0,82.8 665.5,83.1 665.9,82.9 666.0,82.5 667.5,82.5 667.7,83.1 668.0,82.9 668.7,83.0 669.5,82.9 670.0,83.1 671.5,82.9 672.0,83.4 672.4,83.6 672.5,83.4 673.0,83.6 673.5,84.6 674.0,84.3 674.5,84.8 675.5,84.7 675.7,85.2 676.0,84.9 676.1,84.3 676.5,84.3 677.0,85.3 678.5,84.7 679.0,85.6 679.5,85.4 679.8,85.7 680.0,85.5 680.2,85.8 680.5,85.3 681.5,84.9 681.7,85.3 682.6,84.7 683.0,85.8 684.5,85.0 686.5,85.0 687.3,85.6 687.5,86.3 688.6,85.7 691.0,85.8 691.5,86.2 692.0,86.0 692.5,86.3 693.3,86.1 693.5,86.8 693.8,86.5 694.0,86.1 695.0,86.1 695.5,86.6 695.7,86.4 696.0,86.8 696.5,87.0 696.6,86.8 697.5,87.0 698.5,86.0 699.0,87.2 699.5,86.9 700.4,85.8 700.5,86.5 701.0,86.1 701.5,86.0 702.2,86.4 703.0,87.3 703.5,88.3 703.7,87.1 704.2,88.1 706.0,88.7 709.0,88.7 L709.0,88.7 704.2,89.1 703.7,89.9 703.5,89.0 703.0,90.0 702.5,90.3 702.2,90.9 701.5,91.1 701.3,90.8 701.0,91.7 700.0,91.3 699.5,90.9 699.0,90.1 698.5,90.8 696.6,90.1 696.5,90.5 696.0,90.4 695.7,91.1 694.7,90.4 694.5,90.8 694.0,90.6 693.8,90.7 693.5,90.4 693.0,91.2 692.5,91.0 692.0,91.1 691.5,90.9 691.0,91.4 690.5,91.4 688.6,90.6 688.5,91.1 688.2,91.1 688.0,90.8 687.5,91.1 687.3,92.0 686.5,92.1 685.5,92.1 685.4,91.7 685.0,91.4 684.5,92.4 683.0,92.5 682.6,91.9 682.5,91.4 682.0,92.6 681.0,92.2 680.2,92.4 679.8,92.8 679.0,92.9 678.0,92.5 677.5,92.7 677.0,92.4 676.5,92.5 676.1,92.2 676.0,93.2 675.7,92.9 675.5,93.8 671.0,94.3 670.5,94.8 669.0,94.6 668.5,94.3 668.0,94.8 657.5,94.8 656.5,94.1 656.0,94.8 655.5,94.8 654.5,94.1 654.0,94.8 653.5,94.8 652.5,94.1 652.0,94.5 651.5,94.3 651.0,94.8 649.5,94.7 648.5,94.2 648.0,94.7 647.5,94.8 646.5,94.3 646.0,94.8 644.5,94.8 643.7,94.1 643.5,94.8 640.5,94.8 639.5,94.1 639.0,94.8 637.5,94.8 636.5,94.4 636.0,94.8 633.5,94.7 632.5,94.0 632.0,94.8 629.5,94.5 629.0,94.8 626.5,94.5 626.0,94.8 623.5,94.8 622.5,94.1 622.0,94.8 611.5,94.8 610.5,94.1 610.0,94.8 607.5,94.5 607.0,94.8 605.5,94.4 605.0,94.8 602.5,94.8 601.5,94.2 601.0,94.3 600.5,94.0 600.0,94.6 599.0,94.8 595.0,94.8 588.5,94.8 587.5,94.0 587.0,94.8 582.5,94.5 582.0,94.8 580.5,94.5 580.0,94.8 578.5,94.8 577.5,94.3 577.0,94.7 576.5,94.6 576.0,94.8 574.5,94.8 574.0,94.5 573.0,94.4 572.5,94.1 572.0,94.8 568.5,94.8 567.5,94.3 567.0,94.8 562.5,94.8 561.5,94.3 561.0,94.8 555.5,94.8 553.5,94.1 553.0,94.8 550.5,94.3 550.0,94.5 549.0,94.4 548.5,94.1 548.0,94.4 547.5,94.2 547.0,94.8 546.5,94.7 545.5,94.3 545.0,94.8 541.5,94.8 540.5,94.1 540.0,94.8 538.5,94.8 537.5,94.1 537.0,94.8 533.5,94.8 532.5,94.2 532.0,94.8 530.5,94.6 530.0,94.8 525.5,94.6 525.0,94.8 523.5,94.8 522.5,94.4 522.0,94.8 520.5,94.7 519.5,94.1 519.0,94.4 518.5,94.2 518.0,94.8 517.5,94.8 515.5,94.1 515.0,94.8 514.5,94.8 513.5,94.1 513.0,94.8 507.5,94.8 505.5,94.2 505.0,94.5 504.5,94.4 504.0,94.8 503.5,94.8 502.5,94.1 502.0,94.8 499.5,94.5 499.0,94.8 491.5,94.8 490.5,94.1 490.0,94.5 489.5,94.2 489.0,94.8 485.5,94.8 484.5,94.1 484.0,94.1 483.5,93.9 483.0,94.5 474.5,94.5 470.0,94.7 469.0,94.3 466.0,94.3 465.5,94.6 457.6,94.7 457.5,94.5 457.0,94.7 453.2,94.6 453.0,94.8 447.7,94.7 447.5,94.3 447.0,94.1 446.1,94.7 443.1,94.7 443.0,94.4 442.5,94.1 441.6,94.7 420.5,94.7 419.5,94.3 419.0,94.8 416.0,94.8 415.5,94.0 413.0,94.0 412.0,94.4 409.0,94.4 407.6,93.6 407.5,93.7 405.0,93.7 404.5,94.2 404.0,94.3 400.6,94.3 398.0,93.4 395.0,93.3 393.0,94.3 390.0,94.3 388.5,92.9 387.4,92.6 385.0,93.5 381.6,93.6 381.0,92.9 375.8,93.9 372.0,93.9 370.5,91.9 369.0,92.0 367.6,93.2 367.5,93.6 367.0,93.9 363.1,93.8 363.0,93.2 362.5,92.6 362.0,92.3 359.5,92.1 359.0,93.1 358.5,93.5 354.0,93.7 353.0,92.8 351.7,92.8 350.5,93.4 348.5,94.0 348.4,94.2 344.3,94.5 323.6,94.6 323.5,94.7 320.5,94.7 319.5,94.2 315.0,94.6 308.7,93.9 308.5,94.1 304.6,94.3 304.5,94.5 304.0,94.7 300.0,94.6 299.5,94.2 299.0,94.0 296.5,94.0 295.5,94.4 291.5,94.4 291.4,94.1 282.0,93.9 273.7,94.0 273.5,93.6 273.0,93.3 270.0,93.5 269.9,94.0 261.0,93.9 260.5,93.6 257.0,93.6 255.8,92.8 252.2,92.9 252.0,93.3 251.0,93.9 247.2,94.0 247.0,93.7 243.5,93.7 243.0,93.2 241.8,93.2 241.5,93.6 237.6,93.5 237.5,93.2 236.8,93.2 236.5,92.6 236.0,92.2 235.6,92.7 235.5,92.4 234.6,92.0 234.5,91.4 234.3,91.3 234.0,92.4 233.7,92.6 232.5,92.7 232.4,92.0 232.0,91.5 231.5,92.7 230.5,92.7 228.5,91.7 228.1,91.9 228.0,91.6 227.5,92.5 227.2,92.5 227.0,92.0 226.6,91.7 226.5,92.1 225.7,91.6 225.5,91.3 225.0,91.0 224.9,92.1 224.5,92.6 224.4,92.9 223.5,92.2 223.4,92.6 223.0,92.1 222.5,92.5 222.0,91.9 221.6,93.3 221.0,93.3 220.6,92.7 220.5,92.3 220.0,91.9 219.0,91.8 218.8,92.1 218.0,92.1 217.0,91.7 216.9,91.4 216.5,91.8 216.0,92.6 215.6,93.6 214.5,93.3 214.1,92.8 214.0,92.2 213.5,93.6 213.2,93.6 212.8,92.8 212.5,93.4 212.0,93.2 211.3,92.7 211.0,92.9 210.7,92.6 210.4,91.6 210.0,92.5 209.0,92.4 208.0,91.4 207.5,92.4 207.0,92.6 206.6,93.1 205.5,92.9 205.3,93.1 205.0,93.1 204.8,92.3 204.5,91.8 204.0,93.0 203.0,92.6 202.9,92.3 202.0,91.1 201.5,91.1 201.4,90.7 201.0,91.2 200.7,91.0 199.5,90.8 199.0,91.5 197.5,92.1 196.8,91.2 196.5,92.1 194.5,91.9 193.6,91.2 193.5,91.8 192.6,91.5 192.1,91.1 192.0,90.8 191.5,91.1 191.0,91.1 190.8,90.8 190.0,91.1 189.9,91.7 188.5,91.0 188.0,91.7 187.5,91.5 187.0,91.8 186.5,91.7 186.1,91.9 186.0,91.7 185.5,91.5 185.0,90.9 184.3,90.6 184.0,90.9 183.5,90.8 183.3,91.2 183.0,91.3 182.5,90.9 182.4,90.6 182.0,91.3 180.6,91.1 180.5,91.3 180.0,91.3 179.5,90.6 179.0,91.2 178.7,91.0 178.5,91.1 178.1,91.0 178.0,91.1 177.5,90.9 177.0,91.4 176.0,91.4 175.9,91.1 175.5,90.9 175.0,91.3 174.9,91.2 174.6,91.5 171.6,91.7 171.0,91.3 170.5,91.8 169.5,91.7 168.5,91.2 168.4,90.9 168.0,91.1 167.6,90.8 167.5,90.3 167.0,90.2Z" fill="#e19401"/>
<path d="M167.0,174.0 167.6,150.0 168.4,148.0 171.2,117.0 174.0,144.0 176.5,138.0 178.7,130.0 180.6,140.5 182.4,132.0 185.2,144.0 189.0,126.5 190.8,138.0 192.6,146.0 196.4,132.0 199.0,129.0 200.7,136.8 202.0,142.0 204.8,109.0 206.6,129.0 208.9,121.0 211.3,135.0 212.8,102.0 216.0,129.0 218.8,116.0 220.0,142.0 221.6,105.0 224.4,112.5 225.7,135.0 227.2,118.0 229.4,142.0 231.5,108.0 233.7,129.0 235.6,120.0 237.0,112.0 239.5,95.0 480.5,95.0 481.0,95.7 481.5,98.6 482.0,100.8 482.5,104.0 483.0,109.1 483.5,113.0 484.0,110.1 484.5,104.6 485.0,101.2 485.5,97.3 486.0,96.8 486.5,96.8 487.0,101.3 487.5,107.7 488.0,109.0 488.5,102.6 489.0,100.4 489.5,104.1 490.0,99.7 490.5,96.7 491.0,97.4 491.5,99.7 492.0,104.3 492.5,112.6 493.0,111.0 493.5,102.6 494.0,98.0 495.0,97.9 495.5,98.6 496.0,100.0 496.5,98.6 497.0,98.1 497.5,96.7 498.0,98.4 498.5,99.6 499.0,97.6 499.5,96.7 500.0,96.7 500.5,97.8 501.0,98.1 502.0,107.8 503.0,98.1 503.5,99.1 504.0,98.4 504.5,102.5 505.0,107.0 506.0,98.0 506.5,96.9 507.0,97.1 507.5,96.7 508.5,97.2 509.0,98.0 510.0,107.8 511.0,98.0 511.5,98.2 512.0,102.5 512.5,98.1 513.0,97.5 513.5,102.5 514.0,96.7 514.5,96.7 515.0,97.3 515.5,97.3 516.0,96.7 517.0,96.5 517.5,97.7 518.0,96.9 518.5,97.6 519.0,99.1 519.5,99.9 521.0,103.4 521.5,104.4 522.0,104.3 522.5,103.3 523.0,101.4 524.0,99.4 524.5,97.7 525.0,98.4 526.0,96.4 526.5,96.4 527.0,96.9 528.0,99.3 528.5,103.5 529.0,104.3 529.5,100.2 530.0,96.7 530.5,97.3 531.5,96.9 532.0,99.2 532.5,98.1 533.0,96.3 533.5,99.1 534.0,103.8 534.5,103.1 535.5,97.2 536.0,97.5 537.0,96.1 537.5,96.9 538.0,96.7 538.5,96.0 539.0,97.8 539.5,97.7 540.0,95.9 541.0,98.5 541.5,95.9 542.0,97.6 542.5,100.1 543.0,96.3 543.5,95.8 544.5,98.1 545.0,100.0 546.0,96.3 546.5,96.8 547.0,98.9 547.5,96.7 548.0,99.9 548.5,102.9 549.0,97.5 549.5,96.5 550.5,102.0 551.5,96.6 552.0,95.7 552.5,95.7 553.0,97.3 554.0,95.7 554.5,96.4 555.0,98.7 555.5,97.5 556.0,95.7 556.5,95.7 557.0,97.6 557.5,98.2 558.0,95.7 558.5,95.7 559.0,96.9 559.5,99.5 560.0,96.4 560.5,95.6 561.0,96.5 562.0,102.0 563.0,96.6 563.5,98.7 564.0,100.1 564.5,100.1 565.0,103.0 565.5,99.8 566.0,97.1 566.5,97.7 567.0,96.3 567.5,95.6 568.0,95.6 568.5,96.8 569.0,96.0 569.5,95.6 570.5,95.7 571.0,96.1 571.5,95.7 572.0,98.1 573.0,115.0 574.0,98.1 574.5,95.8 575.0,98.3 575.5,98.2 576.0,95.6 576.5,96.1 577.0,96.2 577.5,95.6 578.0,95.9 578.5,97.6 579.0,97.1 579.5,95.9 580.0,96.8 580.5,96.5 581.0,96.7 582.0,104.0 583.0,96.9 583.5,95.8 584.0,96.8 584.5,96.7 585.0,95.7 586.0,95.6 586.5,98.1 587.0,96.1 587.5,95.5 588.0,95.9 588.5,96.6 589.0,96.3 590.0,101.0 590.5,98.6 591.0,96.8 591.5,95.5 592.5,95.5 593.0,98.1 593.5,100.0 594.0,99.6 594.5,97.6 595.0,96.7 595.5,95.5 596.5,95.5 597.0,95.9 597.5,95.8 598.0,96.6 598.5,98.1 599.0,100.0 599.5,98.0 600.0,97.0 600.5,95.5 601.0,95.5 602.0,97.8 602.5,96.2 603.0,96.5 604.0,103.0 604.5,99.7 605.0,96.9 605.5,97.5 606.0,95.6 606.5,95.7 607.0,97.2 608.0,96.2 609.0,101.0 609.5,98.6 610.0,96.6 610.5,96.2 611.0,97.9 611.5,95.4 612.0,95.4 612.5,96.4 613.0,97.1 613.5,95.4 614.0,95.4 615.0,98.0 615.5,96.5 616.0,95.4 616.5,96.5 617.0,97.3 617.5,95.9 618.0,95.4 618.5,95.4 619.0,96.1 619.5,97.2 620.0,95.4 621.0,95.4 621.5,96.1 622.0,98.3 622.5,96.5 623.0,95.4 623.5,96.3 624.5,102.0 625.5,96.2 626.0,95.9 626.5,95.9 627.0,95.4 628.0,95.4 628.5,99.1 629.0,97.9 629.5,95.4 630.5,95.5 631.0,96.2 632.0,95.6 632.5,96.2 633.0,95.9 633.5,96.4 634.5,103.5 635.0,100.0 635.5,97.0 636.0,95.3 637.0,95.3 638.0,96.2 639.0,101.0 639.5,98.5 640.0,96.6 640.5,95.3 641.0,95.3 641.5,95.5 642.0,97.2 642.2,97.3 642.5,98.5 643.0,101.0 643.7,97.5 644.0,96.6 644.5,97.8 645.0,96.9 645.5,95.3 646.5,95.3 647.5,97.4 648.0,99.0 649.0,96.0 649.5,97.0 650.0,95.3 651.0,95.3 651.5,95.6 652.0,96.8 652.5,96.5 653.0,95.3 653.5,95.3 654.0,96.1 654.5,96.4 655.0,95.2 655.5,95.3 656.0,96.3 656.5,96.7 657.0,95.7 657.5,95.8 658.0,97.1 658.5,95.7 659.0,95.2 659.5,95.2 660.0,95.9 660.5,98.2 661.0,95.8 661.5,95.5 662.0,97.5 662.5,95.4 663.0,95.8 664.0,100.0 665.0,95.8 665.5,95.0 666.0,94.9 667.5,96.5 667.7,105.8 668.0,120.1 668.5,98.5 668.7,102.4 669.0,107.8 669.5,107.2 670.0,101.0 670.5,102.8 671.0,124.1 671.5,105.0 672.4,107.7 672.5,108.4 673.0,115.6 673.5,114.3 674.0,113.8 674.3,115.0 674.5,113.7 675.0,121.0 675.5,115.4 675.7,106.3 676.0,103.7 676.1,103.0 676.5,105.1 677.0,119.5 677.5,110.2 678.0,117.2 678.5,122.7 679.0,118.7 679.5,122.1 679.8,125.0 680.0,120.3 680.2,114.8 680.5,107.5 681.0,108.8 681.5,101.3 681.7,97.6 682.0,99.0 682.5,107.6 683.0,103.7 684.0,108.3 684.5,121.6 685.0,117.3 685.4,120.3 685.5,123.7 685.8,133.1 686.0,132.1 686.5,119.2 687.0,119.0 687.3,122.1 687.5,127.4 688.0,129.4 688.2,127.7 688.5,128.5 689.0,132.5 689.5,131.2 690.0,125.0 690.5,128.8 691.0,128.0 691.5,123.4 692.0,136.8 692.5,140.2 692.9,139.3 693.0,139.7 693.3,145.0 693.5,150.5 693.8,153.9 694.0,150.7 694.5,143.5 694.7,142.2 695.0,141.1 695.5,141.6 695.7,139.8 696.0,135.8 696.5,138.5 696.6,140.2 697.0,140.9 697.5,143.3 698.0,156.5 698.5,161.6 699.0,153.2 699.5,148.4 700.0,146.7 700.3,147.1 700.4,145.5 700.5,143.6 701.0,136.2 701.3,138.3 701.5,137.2 702.0,145.6 702.2,149.8 702.5,161.7 703.0,168.2 703.2,168.1 703.5,169.6 704.2,174.0 709.0,174.0 L709.0,174.0 704.2,174.0 703.2,180.0 703.0,182.8 702.5,189.1 702.2,202.0 701.0,205.9 700.5,206.1 700.4,206.5 700.3,206.2 700.0,202.7 699.5,194.9 699.0,185.6 698.5,182.8 697.5,195.0 697.0,198.6 696.6,204.3 696.5,206.6 696.0,213.3 695.7,212.6 695.5,209.1 695.0,209.6 694.7,212.3 694.5,210.5 694.0,202.4 693.8,206.0 693.5,208.4 693.3,207.6 692.9,205.2 692.5,205.6 692.0,214.9 691.5,215.6 691.0,219.5 690.5,230.0 690.0,230.3 689.5,220.3 689.0,217.2 688.6,208.0 688.5,206.5 688.2,209.5 688.0,212.2 687.5,218.2 687.3,218.3 687.0,217.2 686.5,217.6 686.0,225.7 685.8,226.5 685.4,227.6 685.0,221.4 684.5,211.6 684.0,225.4 683.5,235.1 683.0,231.0 682.6,231.7 682.5,233.4 682.0,240.6 681.7,238.5 681.5,234.5 681.0,234.7 680.5,243.0 680.0,244.2 679.8,237.3 679.5,222.2 679.0,246.6 678.0,249.0 677.5,232.7 677.0,242.6 676.5,247.0 676.1,246.0 675.7,237.4 675.5,235.1 675.0,242.7 674.5,239.2 674.3,239.7 674.0,241.5 673.5,243.0 673.0,228.4 672.5,230.1 672.4,233.1 672.0,242.2 671.5,243.2 671.0,236.2 670.5,238.7 670.0,244.2 669.5,240.7 669.0,245.7 668.7,249.2 668.5,248.5 668.0,231.6 667.5,250.4 667.0,251.9 666.0,252.3 665.5,252.0 665.0,249.8 664.5,250.5 664.0,248.0 663.5,250.7 663.0,251.7 662.5,252.2 661.5,250.0 661.0,251.9 660.5,251.9 660.0,251.0 659.5,251.4 659.0,252.3 658.5,251.9 658.0,250.8 657.5,250.1 657.0,246.5 656.5,250.1 656.0,252.2 655.5,251.1 655.0,252.1 654.5,252.0 654.0,251.0 653.0,252.3 652.5,248.3 652.0,250.4 651.5,252.3 651.0,252.3 650.5,249.3 650.0,248.3 649.5,246.0 649.0,249.9 648.5,252.2 648.0,251.6 647.5,252.2 646.0,252.3 645.5,251.5 645.0,251.5 644.5,252.3 644.0,250.0 643.7,249.2 643.5,250.3 643.0,252.2 642.5,249.5 642.2,249.4 642.0,250.5 641.5,252.3 641.0,252.3 640.0,246.5 639.0,252.3 638.5,252.3 638.0,251.3 637.5,248.9 637.0,250.2 636.5,252.3 636.0,252.3 635.5,250.1 635.0,248.7 634.5,251.2 634.0,252.3 633.5,252.1 633.0,250.5 632.5,250.0 632.0,247.0 631.5,250.3 631.0,251.4 630.5,250.2 630.0,251.4 629.5,252.3 629.0,252.3 628.0,251.1 627.5,252.1 627.0,251.9 626.5,251.2 626.0,251.9 625.5,252.3 625.0,249.4 624.5,244.5 624.0,249.1 623.5,252.3 623.0,249.9 622.5,251.9 622.0,249.8 621.5,248.7 621.0,251.4 620.5,252.3 619.5,251.7 619.0,252.2 618.5,249.7 618.0,244.1 617.5,246.2 617.0,247.0 616.5,250.3 616.0,252.1 615.5,250.1 615.0,250.9 614.5,252.3 614.0,250.8 613.5,251.3 613.0,252.3 612.5,251.1 612.0,248.5 611.5,251.7 611.0,252.3 610.0,252.3 609.5,251.0 608.5,252.3 608.0,252.3 607.5,249.3 607.0,244.5 606.5,248.8 606.0,252.3 605.0,252.3 604.5,249.9 604.0,246.0 603.5,249.9 603.0,250.5 602.5,246.2 602.0,249.1 601.5,252.3 601.0,252.3 600.5,249.1 600.0,246.7 599.5,250.8 599.0,252.0 598.5,250.8 598.0,252.3 597.5,252.3 597.0,247.5 596.5,239.6 596.0,245.4 595.5,252.3 594.5,252.3 593.5,250.8 593.0,252.3 592.0,252.3 591.5,251.6 591.0,250.5 590.5,251.6 590.0,252.3 589.0,252.3 588.0,246.0 587.5,249.8 587.0,250.9 586.5,249.2 586.0,251.9 585.5,252.3 585.0,250.9 584.5,247.7 584.0,249.6 583.5,252.3 583.0,248.2 582.5,241.5 582.0,248.2 581.5,251.8 581.0,252.3 580.5,250.3 580.0,250.0 579.5,252.1 579.0,251.6 578.0,252.3 577.5,252.3 577.0,249.1 576.5,247.7 576.0,252.3 575.0,252.3 574.0,250.9 573.5,245.8 573.0,235.0 572.5,245.8 572.0,251.5 571.5,252.3 571.0,251.7 570.5,250.5 570.0,251.5 569.5,252.3 569.0,251.3 568.5,245.0 568.0,245.3 567.5,251.6 567.0,252.3 566.5,251.5 566.0,250.0 565.5,250.8 565.0,252.3 564.5,250.3 564.0,240.1 563.5,242.1 563.0,251.8 562.5,252.3 562.0,249.6 561.5,245.1 561.0,249.9 560.5,250.7 560.0,250.5 559.5,252.3 559.0,250.5 558.5,246.8 558.0,245.7 557.5,251.2 557.0,246.9 556.5,242.8 556.0,248.8 555.5,251.7 555.0,241.8 554.5,246.1 554.0,252.3 553.0,252.3 552.5,246.7 552.0,251.8 551.5,249.3 551.0,241.4 550.0,245.3 549.5,245.2 549.0,252.3 548.5,252.3 548.0,249.6 547.5,250.2 547.0,252.3 546.5,248.6 546.0,239.0 545.5,245.7 545.0,240.5 544.5,244.6 544.0,247.0 543.5,246.7 543.0,242.8 542.5,249.6 542.0,251.8 541.5,248.2 541.0,247.3 540.5,250.8 540.0,251.9 539.5,250.5 539.0,251.5 538.5,248.1 538.0,246.7 537.5,252.3 537.0,251.9 536.5,251.9 536.0,252.3 535.5,252.3 535.0,251.3 534.5,248.0 534.0,241.5 533.5,248.2 533.0,252.3 532.5,251.5 532.0,248.5 531.5,251.3 531.0,252.3 530.5,250.7 530.0,246.2 529.5,240.4 529.0,245.5 528.5,250.1 528.0,249.7 527.5,243.4 527.0,250.0 526.5,251.2 526.0,248.3 525.5,249.9 525.0,246.8 524.5,245.7 524.0,248.7 523.5,247.8 523.0,250.9 522.5,252.3 522.0,246.9 521.5,239.4 521.0,247.8 520.5,252.3 520.0,252.3 519.5,246.9 519.0,242.9 518.5,249.6 518.0,251.8 517.5,248.7 517.0,248.0 516.5,242.1 516.0,243.8 515.5,252.3 515.0,250.9 514.5,252.2 513.5,249.6 513.0,250.5 512.5,243.6 512.0,244.5 511.5,251.5 511.0,242.6 510.5,240.7 510.0,250.3 509.5,249.2 509.0,242.3 508.5,239.1 508.0,249.2 507.5,252.3 507.0,250.6 506.5,243.4 506.0,242.7 505.5,249.2 505.0,248.8 504.5,250.8 504.0,248.1 503.0,249.7 502.5,243.3 502.0,247.1 501.5,251.9 501.0,252.3 500.5,252.2 500.0,251.2 499.5,250.9 499.0,245.6 498.5,242.9 498.0,247.9 497.5,250.3 497.0,245.9 496.5,248.6 496.0,251.8 495.5,245.9 495.0,251.6 494.5,251.0 494.0,246.3 493.5,231.4 493.0,240.3 492.5,251.9 492.0,250.8 491.5,251.2 491.0,252.3 490.5,252.3 490.0,250.5 489.5,249.2 489.0,251.7 488.5,250.7 488.0,242.8 487.5,244.3 487.0,251.6 486.5,251.2 486.0,248.9 485.5,251.7 484.5,251.5 484.0,241.5 483.5,239.3 483.0,250.0 482.5,249.2 482.0,244.0 481.5,249.2 481.0,252.3 239.5,252.3 237.0,240.0 235.6,230.0 234.3,218.6 232.8,244.8 229.4,211.0 228.1,231.7 226.6,209.0 222.5,237.0 220.6,205.6 219.3,228.0 217.5,209.0 215.6,226.0 213.2,240.0 210.7,217.0 208.9,230.0 206.6,210.0 204.8,236.0 201.4,204.6 199.2,218.6 196.4,216.8 193.6,196.0 190.8,205.6 189.0,214.0 187.0,212.0 184.3,201.0 182.4,223.0 179.6,220.0 175.9,203.0 174.0,211.0 171.6,219.6 169.3,208.0 168.4,196.0 167.6,192.0 167.0,174.0Z" fill="#e19401"/>
<path d="M167.0,332.7 167.6,314.0 168.4,309.7 170.3,290.0 172.1,306.0 173.4,295.7 174.9,304.0 176.4,306.0 178.7,294.8 180.5,300.0 183.3,304.0 184.6,299.4 186.1,308.8 188.0,285.4 189.9,304.0 192.1,296.6 194.0,307.8 196.8,288.0 199.2,304.0 200.7,307.8 202.9,298.5 204.8,275.0 206.6,300.0 208.5,280.8 210.4,294.8 212.8,262.0 214.1,266.8 216.0,305.0 216.9,283.6 219.3,274.0 220.3,300.0 221.6,260.0 223.4,278.0 225.7,294.0 228.1,273.0 230.0,293.0 232.4,272.0 234.3,302.0 235.6,274.0 237.0,268.0 239.5,254.4 481.0,254.4 481.5,257.2 482.0,262.0 482.5,260.5 483.0,266.0 483.5,262.2 484.0,264.0 484.5,260.8 485.0,258.0 485.5,255.6 486.0,258.0 486.5,264.0 487.0,258.0 487.5,257.0 488.5,254.4 489.0,255.3 489.5,254.7 490.0,256.3 490.5,263.1 491.0,267.0 491.5,263.1 492.0,260.8 493.0,254.4 493.5,254.7 494.0,257.2 494.5,255.4 495.0,257.2 495.5,262.0 496.0,257.2 496.5,254.4 497.0,254.5 497.5,255.5 498.0,255.1 498.5,257.1 499.0,256.8 499.5,255.8 500.0,255.6 500.5,256.3 501.0,261.4 501.5,262.2 502.0,265.0 502.5,262.2 503.0,258.5 503.5,254.4 504.0,259.0 504.5,259.7 505.0,257.7 505.5,257.9 506.0,260.5 506.5,256.7 507.0,255.6 507.5,255.1 508.0,256.4 508.5,255.1 509.0,255.4 509.5,255.1 510.0,257.6 510.5,263.0 511.0,257.6 511.5,255.6 512.0,254.4 513.0,259.4 513.5,255.8 514.0,254.8 514.5,255.5 515.0,255.1 515.5,254.4 516.0,258.5 516.5,257.8 517.0,263.0 517.5,266.0 518.0,263.0 518.5,257.0 519.0,257.7 519.5,255.6 520.0,255.2 520.5,255.6 521.0,257.1 521.5,261.0 522.0,257.5 522.5,254.4 523.0,258.3 523.5,258.6 524.0,254.4 525.0,255.2 525.5,254.5 526.0,254.4 526.5,257.5 527.0,256.0 527.5,256.1 528.0,259.0 528.5,258.5 529.0,254.7 530.0,255.3 530.5,254.7 531.5,256.4 532.0,255.2 532.5,254.4 533.0,256.3 533.5,256.9 534.0,254.6 534.5,254.4 535.0,255.0 535.5,255.2 536.0,254.4 536.5,254.6 537.0,255.1 537.5,254.4 538.5,254.5 539.0,255.6 539.5,255.9 540.0,258.0 541.5,254.4 542.5,255.0 543.0,254.4 544.0,254.6 544.5,255.2 545.0,255.0 545.5,255.1 546.0,256.7 546.5,254.4 547.5,254.4 548.0,255.6 548.5,256.0 549.0,254.4 549.5,254.4 550.0,255.7 550.5,255.7 551.0,254.4 551.5,255.9 552.0,258.5 552.5,255.9 553.0,254.4 553.5,255.5 554.0,254.7 554.5,254.4 555.0,254.9 555.5,255.1 556.0,254.4 556.5,254.4 557.0,254.8 558.0,254.4 558.5,254.4 559.0,254.7 559.5,256.1 560.0,259.0 560.5,256.1 561.0,255.3 561.5,256.1 562.0,254.9 562.5,255.1 563.0,256.6 564.0,254.7 564.5,255.5 565.0,255.2 565.5,254.4 566.5,255.8 567.0,254.9 567.5,254.8 568.0,254.9 569.0,254.4 570.0,255.8 570.5,254.4 571.0,254.4 571.5,254.8 572.0,255.8 572.5,258.0 573.0,257.2 573.5,258.7 574.0,255.3 575.0,255.0 576.0,256.2 576.5,254.7 577.0,254.4 577.5,254.5 578.0,255.6 578.5,254.7 579.0,254.4 579.5,254.4 580.0,255.7 580.5,254.8 581.0,254.4 581.5,254.5 582.0,255.0 582.5,254.9 583.0,255.1 583.5,255.8 584.0,258.0 585.0,254.6 585.5,256.1 586.0,256.4 586.5,255.1 587.0,255.5 587.5,255.4 588.0,254.6 589.0,255.2 589.5,254.7 590.0,254.4 590.5,254.4 591.0,255.1 591.5,254.8 592.0,256.9 592.5,261.0 593.0,256.9 593.5,255.1 594.0,256.0 594.5,255.3 596.0,254.4 596.5,254.4 597.0,254.9 597.5,256.3 598.0,254.4 598.5,254.4 599.0,255.0 599.5,256.5 600.0,257.0 600.5,255.5 601.0,255.0 601.5,254.8 602.0,255.3 602.5,254.7 603.0,255.0 603.5,256.2 604.0,254.9 605.0,255.2 605.5,254.5 606.0,258.7 606.5,257.6 607.0,254.4 607.5,255.8 608.0,258.5 608.5,254.8 609.0,256.7 609.5,257.0 610.0,254.8 610.5,255.2 611.0,254.8 611.5,255.8 612.0,258.0 612.5,257.2 613.0,257.9 613.5,255.3 614.0,255.0 614.5,256.4 615.0,254.4 615.5,254.5 616.0,255.7 616.5,255.5 617.0,254.4 617.5,254.5 618.0,255.4 618.5,255.8 619.0,257.5 619.5,255.6 620.0,255.3 620.5,255.3 621.0,254.4 621.5,254.4 622.5,255.0 623.0,254.4 624.0,256.4 624.5,256.0 625.0,258.0 625.5,255.8 626.0,254.4 627.0,255.0 628.0,254.4 628.5,255.5 629.0,255.8 629.5,255.2 630.0,255.5 630.5,254.7 631.0,258.6 631.5,257.6 632.0,254.4 632.5,254.8 633.0,256.3 633.5,254.4 634.5,254.9 635.0,254.5 635.5,254.4 636.0,255.2 637.0,254.4 637.5,254.4 638.0,254.8 638.5,254.9 639.0,254.4 639.5,254.4 640.0,255.6 640.5,255.5 641.0,255.6 641.5,257.5 642.0,255.6 642.5,255.4 643.0,255.7 643.5,254.8 643.7,254.9 644.0,255.6 644.5,254.6 645.0,255.3 645.5,256.4 646.0,254.8 646.5,256.6 647.0,258.0 647.5,256.1 648.0,254.4 648.5,255.1 649.0,256.0 649.5,254.4 650.0,254.6 650.5,255.2 651.0,255.0 651.5,254.5 652.0,255.3 652.5,255.1 653.5,255.0 654.0,254.5 654.5,255.7 655.0,255.5 655.5,254.4 656.0,254.4 657.0,255.7 657.5,254.9 658.0,254.9 658.5,256.4 659.0,254.8 659.5,255.8 660.0,257.5 660.5,255.6 661.0,255.7 661.5,254.9 662.0,254.4 662.5,254.4 663.0,254.9 663.5,256.0 664.0,254.4 664.5,254.6 665.0,255.0 665.5,254.5 667.0,254.0 667.5,257.4 668.0,270.8 668.5,258.6 668.7,260.5 669.0,272.8 669.5,264.3 670.0,258.1 670.5,263.0 671.0,263.8 671.5,266.2 672.0,270.0 672.4,268.2 672.5,268.1 673.0,281.5 673.5,283.0 674.0,277.2 674.3,279.5 674.5,280.4 675.0,279.7 675.5,275.9 675.7,275.8 676.0,281.1 676.1,283.1 676.5,282.3 677.0,272.0 677.5,274.2 678.0,280.3 678.5,282.0 679.0,285.2 679.5,300.0 679.8,292.6 680.0,286.8 680.2,282.4 680.5,284.4 681.0,290.6 681.5,280.3 681.7,275.2 682.0,272.8 682.6,269.6 683.0,277.5 683.5,272.5 684.0,280.9 684.5,284.9 685.0,272.5 685.4,272.0 685.5,273.2 685.8,279.8 686.0,282.9 686.5,285.1 687.0,295.3 687.3,297.4 687.5,295.7 688.0,291.1 688.6,288.0 689.0,290.6 689.5,293.3 690.0,284.1 690.5,292.5 691.0,290.7 691.5,297.3 692.0,300.0 692.5,298.5 692.9,301.1 693.0,302.0 693.3,301.5 693.5,298.6 693.8,293.6 694.0,292.6 694.5,290.7 694.7,293.7 695.0,302.0 695.5,302.1 695.7,300.9 696.0,302.1 696.5,312.3 696.6,314.6 697.0,315.9 697.5,316.0 698.0,315.3 698.5,310.3 699.0,301.6 699.5,302.1 700.0,295.9 700.3,289.0 700.4,289.8 700.5,291.9 701.0,301.0 701.3,299.4 701.5,299.1 702.0,309.8 702.2,309.8 702.5,309.5 703.7,330.0 704.2,332.7 709.0,332.7 L709.0,332.7 704.2,332.7 703.7,335.0 703.5,337.0 703.2,339.2 703.0,342.7 702.5,352.6 702.2,357.0 702.0,358.6 701.5,355.1 701.3,360.4 701.0,369.0 700.4,375.0 700.3,373.2 700.0,366.7 699.5,355.3 699.0,350.3 698.5,341.5 698.0,345.6 697.5,345.9 697.0,353.7 696.0,361.7 695.7,363.9 695.5,364.0 695.0,368.2 694.7,372.0 694.5,368.5 694.0,358.9 693.8,357.2 693.5,358.6 693.3,358.3 693.0,362.4 692.5,367.5 692.0,364.1 691.5,376.8 691.0,370.2 690.5,370.8 690.0,357.0 689.5,363.1 689.0,364.0 688.6,371.5 688.5,372.5 688.2,370.6 687.3,363.0 687.0,365.6 686.5,373.0 686.0,385.5 685.8,389.0 685.5,380.3 685.4,378.1 685.0,376.4 684.5,372.0 684.0,377.9 683.5,379.0 683.0,378.2 682.6,393.8 682.5,394.1 682.0,388.2 681.7,387.9 681.5,388.3 681.0,378.8 680.5,379.0 680.2,381.3 680.0,383.6 679.8,384.7 679.5,381.8 679.0,380.7 678.5,391.9 678.0,394.2 677.5,382.8 677.0,387.4 676.5,385.5 676.1,375.9 676.0,372.4 675.7,365.6 675.5,372.8 675.0,393.7 674.5,403.0 674.3,396.1 674.0,382.4 673.5,403.2 673.0,401.0 672.5,387.7 672.4,390.5 672.0,398.0 671.5,396.5 671.0,395.4 670.5,391.7 670.0,404.0 669.5,403.0 669.0,404.5 668.7,410.3 668.5,408.0 668.0,393.9 667.5,408.1 667.0,410.7 666.0,410.7 665.9,410.3 665.5,407.3 665.0,408.3 664.5,409.7 664.0,408.0 663.5,409.6 663.0,410.7 662.5,410.6 662.0,409.7 661.5,409.6 661.0,410.5 660.5,408.4 660.0,402.7 659.5,402.5 659.0,407.8 658.5,408.6 658.0,409.8 657.5,410.7 657.0,409.0 656.5,407.8 656.0,409.8 655.5,410.7 655.0,410.7 654.5,409.6 654.0,409.1 653.5,410.7 653.0,410.7 652.5,409.8 652.0,408.0 651.5,408.1 651.0,405.0 650.5,408.6 650.0,409.7 649.5,406.5 649.0,409.8 648.5,407.6 648.0,407.6 647.5,408.6 647.0,406.0 646.5,408.2 646.0,406.5 645.5,410.1 645.0,410.7 644.5,409.2 644.0,409.1 643.7,410.6 643.0,410.7 642.5,402.4 642.2,400.0 642.0,401.9 641.5,409.4 641.0,410.6 640.5,409.2 640.0,409.5 639.5,410.7 638.5,407.7 638.0,409.8 637.5,410.7 637.0,410.7 636.5,409.5 636.0,409.1 635.5,410.7 635.0,410.7 634.5,408.9 634.0,408.3 633.5,408.2 633.0,404.5 632.5,407.9 632.0,410.2 631.5,409.6 630.5,410.3 630.0,409.4 629.0,410.2 628.5,409.4 627.5,410.7 627.0,410.7 626.5,408.9 626.0,400.1 625.5,406.4 625.0,408.1 624.5,405.0 624.0,407.3 623.5,410.7 623.0,410.4 622.5,408.4 622.0,410.0 621.5,409.9 621.0,410.2 620.5,410.0 620.0,408.3 619.5,409.1 619.0,406.5 618.5,409.1 618.0,409.3 617.5,410.0 617.0,410.1 616.0,408.6 615.5,405.0 615.0,407.0 614.5,409.3 614.0,410.7 613.5,410.6 613.0,409.5 612.0,410.7 611.5,410.7 611.0,409.4 610.5,410.5 609.5,410.7 609.0,410.1 608.5,408.6 608.0,405.0 607.5,408.6 607.0,410.7 606.5,408.4 606.0,407.9 605.5,410.2 605.0,407.9 604.5,404.5 604.0,407.8 603.5,410.7 603.0,410.4 602.5,409.6 602.0,409.7 601.5,407.2 601.0,405.0 600.5,408.6 600.0,406.8 599.5,408.9 599.0,409.9 598.5,408.5 598.0,409.8 597.5,410.7 597.0,410.7 596.5,407.4 596.0,402.0 595.5,407.4 595.0,410.7 594.5,409.3 594.0,403.7 593.5,404.4 593.0,401.0 592.5,407.1 592.0,409.4 591.5,407.0 591.0,410.0 590.5,410.0 590.0,406.9 589.5,400.5 589.0,406.9 588.5,410.5 588.0,409.3 587.5,409.3 587.0,410.7 586.5,410.0 586.0,410.2 585.5,410.7 585.0,408.0 584.5,403.5 584.0,408.0 583.5,410.7 583.0,410.5 582.5,409.8 582.0,410.6 581.0,408.8 580.5,410.7 580.0,410.7 579.5,409.7 579.0,407.3 578.5,410.0 578.0,410.7 577.5,409.8 577.0,406.9 576.5,409.8 576.0,410.7 575.5,410.7 575.0,409.4 574.5,409.0 574.0,410.7 573.5,410.7 573.0,410.1 572.5,410.3 572.0,410.7 571.5,410.7 571.0,407.4 570.5,402.0 570.0,404.9 569.5,409.9 569.0,410.7 568.5,410.3 568.0,406.7 567.5,410.7 567.0,410.3 566.5,408.2 565.5,409.4 565.0,407.9 564.5,408.3 564.0,405.0 563.5,408.3 563.0,410.7 562.5,408.7 562.0,408.6 561.5,410.7 561.0,410.7 560.5,409.0 560.0,405.8 559.5,397.5 559.0,405.8 558.5,410.3 558.0,409.2 557.5,409.7 557.0,410.4 556.5,408.3 556.0,408.5 555.5,407.4 555.0,402.0 554.5,407.4 554.0,408.6 553.5,405.0 553.0,408.6 552.5,406.9 552.0,400.5 551.5,406.9 551.0,410.4 550.5,410.7 550.0,410.7 549.5,406.4 549.0,409.7 548.5,410.7 548.0,410.4 547.5,409.4 547.0,410.7 546.0,409.3 545.5,410.4 545.0,410.0 544.5,407.9 544.0,407.6 543.5,402.5 543.0,407.5 542.5,409.8 542.0,410.7 541.5,409.4 541.0,406.8 540.5,409.0 540.0,410.7 539.5,407.8 539.0,409.0 538.5,410.7 538.0,410.1 537.5,408.0 536.5,410.7 536.0,410.0 535.5,408.0 535.0,404.0 534.5,408.2 534.0,410.4 533.5,410.2 533.0,409.0 532.5,410.7 532.0,409.0 531.5,405.3 531.0,409.2 530.5,410.3 530.0,409.4 529.5,409.7 529.0,410.7 528.0,408.2 527.5,410.5 527.0,410.7 526.5,410.2 526.0,409.1 525.5,408.6 525.0,405.0 524.5,408.6 524.0,410.6 523.5,409.7 523.0,410.0 522.5,410.7 522.0,410.7 521.5,408.5 521.0,408.1 520.5,410.7 520.0,410.3 519.5,404.6 519.0,403.4 518.5,407.1 518.0,402.9 517.5,404.8 517.0,404.6 516.5,396.5 516.0,405.2 515.5,410.7 515.0,405.5 514.5,403.8 514.0,409.5 513.5,410.1 513.0,407.9 512.5,410.7 512.0,406.3 511.5,404.0 511.0,398.0 510.5,405.9 510.0,404.0 509.5,399.0 509.0,406.3 508.5,410.3 508.0,409.6 507.5,410.7 507.0,410.7 506.5,410.3 506.0,408.5 505.5,407.6 505.0,404.0 504.5,408.2 504.0,409.6 503.5,410.6 503.0,410.7 502.5,410.5 502.0,408.7 501.5,400.6 501.0,398.5 500.5,408.7 500.0,410.7 499.5,410.2 499.0,408.9 498.5,410.6 498.0,410.5 497.5,409.6 496.5,410.1 496.0,409.2 495.5,410.2 495.0,410.7 494.5,408.0 494.0,403.5 493.5,408.0 493.0,410.7 492.5,410.0 491.5,410.4 491.0,410.2 490.5,407.1 490.0,401.0 489.5,406.8 489.0,408.0 488.5,408.6 488.0,404.2 487.5,409.5 487.0,410.7 486.5,409.9 486.0,407.2 485.5,407.2 485.0,404.0 484.5,407.4 484.0,405.2 483.5,396.0 483.0,405.2 482.5,407.4 482.0,402.0 481.5,400.0 480.0,407.0 478.3,398.0 476.7,405.6 474.7,399.0 471.7,409.7 470.0,394.0 467.6,404.0 465.9,396.5 463.4,409.0 461.8,399.0 459.3,409.7 457.6,394.8 455.2,409.0 453.2,399.8 451.0,410.5 449.4,409.0 447.7,389.0 446.1,394.0 444.8,409.7 443.1,385.0 441.6,395.7 440.3,409.7 438.6,383.0 437.0,409.7 436.2,389.0 435.0,393.0 432.9,410.5 431.5,409.0 429.9,385.0 427.9,409.7 426.2,385.0 424.6,409.7 423.4,396.5 422.1,409.7 421.0,385.7 418.8,394.0 417.5,410.5 416.3,387.0 414.7,400.6 412.5,388.0 410.2,405.6 408.9,392.0 407.6,385.7 405.6,397.0 404.0,385.7 402.3,404.7 400.6,397.0 398.6,389.0 396.5,392.0 394.3,386.6 392.7,397.0 391.5,404.0 389.9,385.7 387.4,375.8 385.8,381.6 382.8,394.8 381.6,362.6 380.5,361.0 378.3,389.0 375.8,393.0 373.9,399.8 372.5,374.0 370.5,366.0 367.6,374.0 365.1,399.0 363.1,368.0 361.8,379.0 360.1,374.0 358.5,366.0 357.5,375.8 356.8,394.0 355.3,397.0 354.2,371.0 352.9,367.6 351.7,385.0 350.0,380.8 348.4,394.0 346.4,404.0 344.3,399.8 342.6,407.0 341.0,404.0 338.5,407.0 336.8,399.8 335.2,407.0 333.5,393.0 331.9,405.6 330.2,401.5 327.7,409.0 326.6,399.8 325.3,407.0 323.6,399.0 321.6,409.7 320.3,395.7 316.2,405.6 314.5,399.0 312.9,409.0 311.2,400.6 308.7,390.7 306.2,404.0 304.6,394.0 302.1,409.7 300.5,390.7 298.0,400.6 296.3,387.0 293.5,405.6 291.4,380.8 289.7,402.0 288.1,390.7 286.4,402.0 284.9,390.0 283.9,400.6 282.3,387.0 280.3,399.0 278.6,388.0 276.5,399.0 275.3,400.6 273.7,374.0 271.5,392.0 269.9,369.0 268.2,400.0 266.6,384.0 265.4,400.6 263.8,382.0 262.4,399.0 260.8,373.0 259.1,395.7 257.5,385.0 255.8,372.5 253.9,385.7 252.2,363.4 250.5,387.0 248.9,400.6 247.2,374.0 245.1,397.0 243.4,369.0 241.8,390.0 241.0,377.5 239.6,395.7 237.6,363.4 236.8,390.7 236.5,378.6 234.6,365.6 232.4,384.0 230.0,369.0 228.1,381.0 226.2,365.6 224.9,368.0 222.5,391.7 220.3,360.0 219.3,376.0 217.5,357.0 215.6,360.0 214.1,396.0 210.0,371.0 208.5,382.0 207.0,370.0 205.3,389.0 202.0,361.0 198.2,362.8 196.4,376.8 194.5,371.0 192.1,362.0 190.2,359.0 188.0,374.0 185.2,357.0 183.3,360.0 181.5,366.5 179.6,359.0 178.1,367.0 176.4,360.0 174.6,368.0 172.7,356.0 171.2,372.0 169.3,364.6 168.4,352.5 167.6,348.0 167.0,332.7Z" fill="#e19401"/>
<g stroke="#5a3200" stroke-width="0.8" opacity="0.07"><line x1="188.8" y1="94.5" x2="188.8" y2="411.5"/><line x1="211.1" y1="94.5" x2="211.1" y2="411.5"/><line x1="233.4" y1="94.5" x2="233.4" y2="411.5"/><line x1="255.7" y1="94.5" x2="255.7" y2="411.5"/><line x1="278.1" y1="94.5" x2="278.1" y2="411.5"/><line x1="300.4" y1="94.5" x2="300.4" y2="411.5"/><line x1="322.7" y1="94.5" x2="322.7" y2="411.5"/><line x1="345.0" y1="94.5" x2="345.0" y2="411.5"/><line x1="367.3" y1="94.5" x2="367.3" y2="411.5"/><line x1="389.6" y1="94.5" x2="389.6" y2="411.5"/><line x1="411.9" y1="94.5" x2="411.9" y2="411.5"/><line x1="434.2" y1="94.5" x2="434.2" y2="411.5"/><line x1="456.5" y1="94.5" x2="456.5" y2="411.5"/><line x1="478.8" y1="94.5" x2="478.8" y2="411.5"/><line x1="501.1" y1="94.5" x2="501.1" y2="411.5"/><line x1="523.5" y1="94.5" x2="523.5" y2="411.5"/><line x1="545.8" y1="94.5" x2="545.8" y2="411.5"/><line x1="568.1" y1="94.5" x2="568.1" y2="411.5"/><line x1="590.4" y1="94.5" x2="590.4" y2="411.5"/><line x1="612.7" y1="94.5" x2="612.7" y2="411.5"/><line x1="635.0" y1="94.5" x2="635.0" y2="411.5"/><line x1="657.3" y1="94.5" x2="657.3" y2="411.5"/><line x1="679.6" y1="94.5" x2="679.6" y2="411.5"/><line x1="701.9" y1="94.5" x2="701.9" y2="411.5"/><line x1="167" y1="101.4" x2="709" y2="101.4"/><line x1="167" y1="119.6" x2="709" y2="119.6"/><line x1="167" y1="137.7" x2="709" y2="137.7"/><line x1="167" y1="155.8" x2="709" y2="155.8"/><line x1="167" y1="192.2" x2="709" y2="192.2"/><line x1="167" y1="210.3" x2="709" y2="210.3"/><line x1="167" y1="228.4" x2="709" y2="228.4"/><line x1="167" y1="246.6" x2="709" y2="246.6"/><line x1="167" y1="260.1" x2="709" y2="260.1"/><line x1="167" y1="278.2" x2="709" y2="278.2"/><line x1="167" y1="296.4" x2="709" y2="296.4"/><line x1="167" y1="314.6" x2="709" y2="314.6"/><line x1="167" y1="350.8" x2="709" y2="350.8"/><line x1="167" y1="369.0" x2="709" y2="369.0"/><line x1="167" y1="387.1" x2="709" y2="387.1"/><line x1="167" y1="405.3" x2="709" y2="405.3"/></g>
<rect x="167" y="253" width="542" height="1" fill="#0d2a2a"/>
<rect x="165.6" y="68" width="1.3" height="343.5" fill="#bcc4c4"/><rect x="708.2" y="68.3" width="0.9" height="343.2" fill="#6f7a7a"/>
<rect x="163.7" y="411.5" width="581" height="11.8" fill="#161e1e"/>
<g font-family="'Liberation Sans',sans-serif" font-size="5.65"><line x1="166.5" y1="411.5" x2="166.5" y2="416.5" stroke="#9aa3a3" stroke-width="1"/><text x="169.0" y="420.1" fill="#c2caca" letter-spacing="-0.3">00:00.000</text><line x1="211.1" y1="411.5" x2="211.1" y2="416.5" stroke="#9aa3a3" stroke-width="1"/><text x="213.6" y="420.1" fill="#c2caca" letter-spacing="-0.3">00:20.000</text><line x1="255.7" y1="411.5" x2="255.7" y2="416.5" stroke="#9aa3a3" stroke-width="1"/><text x="258.2" y="420.1" fill="#c2caca" letter-spacing="-0.3">00:40.000</text><line x1="300.4" y1="411.5" x2="300.4" y2="416.5" stroke="#9aa3a3" stroke-width="1"/><text x="302.9" y="420.1" fill="#c2caca" letter-spacing="-0.3">01:00.000</text><line x1="345.0" y1="411.5" x2="345.0" y2="416.5" stroke="#9aa3a3" stroke-width="1"/><text x="347.5" y="420.1" fill="#c2caca" letter-spacing="-0.3">01:20.000</text><line x1="389.6" y1="411.5" x2="389.6" y2="416.5" stroke="#9aa3a3" stroke-width="1"/><text x="392.1" y="420.1" fill="#c2caca" letter-spacing="-0.3">01:40.000</text><line x1="434.2" y1="411.5" x2="434.2" y2="416.5" stroke="#9aa3a3" stroke-width="1"/><text x="436.7" y="420.1" fill="#c2caca" letter-spacing="-0.3">02:00.000</text><line x1="478.8" y1="411.5" x2="478.8" y2="416.5" stroke="#9aa3a3" stroke-width="1"/><text x="481.3" y="420.1" fill="#c2caca" letter-spacing="-0.3">02:20.000</text><line x1="523.5" y1="411.5" x2="523.5" y2="416.5" stroke="#9aa3a3" stroke-width="1"/><text x="526.0" y="420.1" fill="#c2caca" letter-spacing="-0.3">02:40.000</text><line x1="568.1" y1="411.5" x2="568.1" y2="416.5" stroke="#9aa3a3" stroke-width="1"/><text x="570.6" y="420.1" fill="#c2caca" letter-spacing="-0.3">03:00.000</text><line x1="612.7" y1="411.5" x2="612.7" y2="416.5" stroke="#9aa3a3" stroke-width="1"/><text x="615.2" y="420.1" fill="#c2caca" letter-spacing="-0.3">03:20.000</text><line x1="657.3" y1="411.5" x2="657.3" y2="416.5" stroke="#9aa3a3" stroke-width="1"/><text x="659.8" y="420.1" fill="#c2caca" letter-spacing="-0.3">03:40.000</text><line x1="701.9" y1="411.5" x2="701.9" y2="416.5" stroke="#9aa3a3" stroke-width="1"/><text x="704.4" y="420.1" fill="#303a3a" letter-spacing="-0.3">04:00.000</text><line x1="171.0" y1="411" x2="171.0" y2="412.6" stroke="#7e8888" stroke-width="0.6"/><line x1="175.4" y1="411" x2="175.4" y2="412.6" stroke="#7e8888" stroke-width="0.6"/><line x1="179.9" y1="411" x2="179.9" y2="412.6" stroke="#7e8888" stroke-width="0.6"/><line x1="184.3" y1="411" x2="184.3" y2="412.6" stroke="#7e8888" stroke-width="0.6"/><line x1="188.8" y1="411" x2="188.8" y2="412.6" stroke="#7e8888" stroke-width="0.6"/><line x1="193.3" y1="411" x2="193.3" y2="412.6" stroke="#7e8888" stroke-width="0.6"/><line x1="197.7" y1="411" x2="197.7" y2="412.6" stroke="#7e8888" stroke-width="0.6"/><line x1="202.2" y1="411" x2="202.2" y2="412.6" stroke="#7e8888" stroke-width="0.6"/><line x1="206.7" y1="411" x2="206.7" y2="412.6" stroke="#7e8888" stroke-width="0.6"/><line x1="215.6" y1="411" x2="215.6" y2="412.6" stroke="#7e8888" stroke-width="0.6"/><line x1="220.0" y1="411" x2="220.0" y2="412.6" stroke="#7e8888" stroke-width="0.6"/><line x1="224.5" y1="411" x2="224.5" y2="412.6" stroke="#7e8888" stroke-width="0.6"/><line x1="229.0" y1="411" x2="229.0" y2="412.6" stroke="#7e8888" stroke-width="0.6"/><line x1="233.4" y1="411" x2="233.4" y2="412.6" stroke="#7e8888" stroke-width="0.6"/><line x1="237.9" y1="411" x2="237.9" y2="412.6" stroke="#7e8888" stroke-width="0.6"/><line x1="242.4" y1="411" x2="242.4" y2="412.6" stroke="#7e8888" stroke-width="0.6"/><line x1="246.8" y1="411" x2="246.8" y2="412.6" stroke="#7e8888" stroke-width="0.6"/><line x1="251.3" y1="411" x2="251.3" y2="412.6" stroke="#7e8888" stroke-width="0.6"/><line x1="260.2" y1="411" x2="260.2" y2="412.6" stroke="#7e8888" stroke-width="0.6"/><line x1="264.7" y1="411" x2="264.7" y2="412.6" stroke="#7e8888" stroke-width="0.6"/><line x1="269.1" y1="411" x2="269.1" y2="412.6" stroke="#7e8888" stroke-width="0.6"/><line x1="273.6" y1="411" x2="273.6" y2="412.6" stroke="#7e8888" stroke-width="0.6"/><line x1="278.1" y1="411" x2="278.1" y2="412.6" stroke="#7e8888" stroke-width="0.6"/><line x1="282.5" y1="411" x2="282.5" y2="412.6" stroke="#7e8888" stroke-width="0.6"/><line x1="287.0" y1="411" x2="287.0" y2="412.6" stroke="#7e8888" stroke-width="0.6"/><line x1="291.4" y1="411" x2="291.4" y2="412.6" stroke="#7e8888" stroke-width="0.6"/><line x1="295.9" y1="411" x2="295.9" y2="412.6" stroke="#7e8888" stroke-width="0.6"/><line x1="304.8" y1="411" x2="304.8" y2="412.6" stroke="#7e8888" stroke-width="0.6"/><line x1="309.3" y1="411" x2="309.3" y2="412.6" stroke="#7e8888" stroke-width="0.6"/><line x1="313.7" y1="411" x2="313.7" y2="412.6" stroke="#7e8888" stroke-width="0.6"/><line x1="318.2" y1="411" x2="318.2" y2="412.6" stroke="#7e8888" stroke-width="0.6"/><line x1="322.7" y1="411" x2="322.7" y2="412.6" stroke="#7e8888" stroke-width="0.6"/><line x1="327.1" y1="411" x2="327.1" y2="412.6" stroke="#7e8888" stroke-width="0.6"/><line x1="331.6" y1="411" x2="331.6" y2="412.6" stroke="#7e8888" stroke-width="0.6"/><line x1="336.1" y1="411" x2="336.1" y2="412.6" stroke="#7e8888" stroke-width="0.6"/><line x1="340.5" y1="411" x2="340.5" y2="412.6" stroke="#7e8888" stroke-width="0.6"/><line x1="349.4" y1="411" x2="349.4" y2="412.6" stroke="#7e8888" stroke-width="0.6"/><line x1="353.9" y1="411" x2="353.9" y2="412.6" stroke="#7e8888" stroke-width="0.6"/><line x1="358.4" y1="411" x2="358.4" y2="412.6" stroke="#7e8888" stroke-width="0.6"/><line x1="362.8" y1="411" x2="362.8" y2="412.6" stroke="#7e8888" stroke-width="0.6"/><line x1="367.3" y1="411" x2="367.3" y2="412.6" stroke="#7e8888" stroke-width="0.6"/><line x1="371.8" y1="411" x2="371.8" y2="412.6" stroke="#7e8888" stroke-width="0.6"/><line x1="376.2" y1="411" x2="376.2" y2="412.6" stroke="#7e8888" stroke-width="0.6"/><line x1="380.7" y1="411" x2="380.7" y2="412.6" stroke="#7e8888" stroke-width="0.6"/><line x1="385.1" y1="411" x2="385.1" y2="412.6" stroke="#7e8888" stroke-width="0.6"/><line x1="394.1" y1="411" x2="394.1" y2="412.6" stroke="#7e8888" stroke-width="0.6"/><line x1="398.5" y1="411" x2="398.5" y2="412.6" stroke="#7e8888" stroke-width="0.6"/><line x1="403.0" y1="411" x2="403.0" y2="412.6" stroke="#7e8888" stroke-width="0.6"/><line x1="407.4" y1="411" x2="407.4" y2="412.6" stroke="#7e8888" stroke-width="0.6"/><line x1="411.9" y1="411" x2="411.9" y2="412.6" stroke="#7e8888" stroke-width="0.6"/><line x1="416.4" y1="411" x2="416.4" y2="412.6" stroke="#7e8888" stroke-width="0.6"/><line x1="420.8" y1="411" x2="420.8" y2="412.6" stroke="#7e8888" stroke-width="0.6"/><line x1="425.3" y1="411" x2="425.3" y2="412.6" stroke="#7e8888" stroke-width="0.6"/><line x1="429.8" y1="411" x2="429.8" y2="412.6" stroke="#7e8888" stroke-width="0.6"/><line x1="438.7" y1="411" x2="438.7" y2="412.6" stroke="#7e8888" stroke-width="0.6"/><line x1="443.1" y1="411" x2="443.1" y2="412.6" stroke="#7e8888" stroke-width="0.6"/><line x1="447.6" y1="411" x2="447.6" y2="412.6" stroke="#7e8888" stroke-width="0.6"/><line x1="452.1" y1="411" x2="452.1" y2="412.6" stroke="#7e8888" stroke-width="0.6"/><line x1="456.5" y1="411" x2="456.5" y2="412.6" stroke="#7e8888" stroke-width="0.6"/><line x1="461.0" y1="411" x2="461.0" y2="412.6" stroke="#7e8888" stroke-width="0.6"/><line x1="465.5" y1="411" x2="465.5" y2="412.6" stroke="#7e8888" stroke-width="0.6"/><line x1="469.9" y1="411" x2="469.9" y2="412.6" stroke="#7e8888" stroke-width="0.6"/><line x1="474.4" y1="411" x2="474.4" y2="412.6" stroke="#7e8888" stroke-width="0.6"/><line x1="483.3" y1="411" x2="483.3" y2="412.6" stroke="#7e8888" stroke-width="0.6"/><line x1="487.8" y1="411" x2="487.8" y2="412.6" stroke="#7e8888" stroke-width="0.6"/><line x1="492.2" y1="411" x2="492.2" y2="412.6" stroke="#7e8888" stroke-width="0.6"/><line x1="496.7" y1="411" x2="496.7" y2="412.6" stroke="#7e8888" stroke-width="0.6"/><line x1="501.1" y1="411" x2="501.1" y2="412.6" stroke="#7e8888" stroke-width="0.6"/><line x1="505.6" y1="411" x2="505.6" y2="412.6" stroke="#7e8888" stroke-width="0.6"/><line x1="510.1" y1="411" x2="510.1" y2="412.6" stroke="#7e8888" stroke-width="0.6"/><line x1="514.5" y1="411" x2="514.5" y2="412.6" stroke="#7e8888" stroke-width="0.6"/><line x1="519.0" y1="411" x2="519.0" y2="412.6" stroke="#7e8888" stroke-width="0.6"/><line x1="527.9" y1="411" x2="527.9" y2="412.6" stroke="#7e8888" stroke-width="0.6"/><line x1="532.4" y1="411" x2="532.4" y2="412.6" stroke="#7e8888" stroke-width="0.6"/><line x1="536.8" y1="411" x2="536.8" y2="412.6" stroke="#7e8888" stroke-width="0.6"/><line x1="541.3" y1="411" x2="541.3" y2="412.6" stroke="#7e8888" stroke-width="0.6"/><line x1="545.8" y1="411" x2="545.8" y2="412.6" stroke="#7e8888" stroke-width="0.6"/><line x1="550.2" y1="411" x2="550.2" y2="412.6" stroke="#7e8888" stroke-width="0.6"/><line x1="554.7" y1="411" x2="554.7" y2="412.6" stroke="#7e8888" stroke-width="0.6"/><line x1="559.2" y1="411" x2="559.2" y2="412.6" stroke="#7e8888" stroke-width="0.6"/><line x1="563.6" y1="411" x2="563.6" y2="412.6" stroke="#7e8888" stroke-width="0.6"/><line x1="572.5" y1="411" x2="572.5" y2="412.6" stroke="#7e8888" stroke-width="0.6"/><line x1="577.0" y1="411" x2="577.0" y2="412.6" stroke="#7e8888" stroke-width="0.6"/><line x1="581.5" y1="411" x2="581.5" y2="412.6" stroke="#7e8888" stroke-width="0.6"/><line x1="585.9" y1="411" x2="585.9" y2="412.6" stroke="#7e8888" stroke-width="0.6"/><line x1="590.4" y1="411" x2="590.4" y2="412.6" stroke="#7e8888" stroke-width="0.6"/><line x1="594.9" y1="411" x2="594.9" y2="412.6" stroke="#7e8888" stroke-width="0.6"/><line x1="599.3" y1="411" x2="599.3" y2="412.6" stroke="#7e8888" stroke-width="0.6"/><line x1="603.8" y1="411" x2="603.8" y2="412.6" stroke="#7e8888" stroke-width="0.6"/><line x1="608.2" y1="411" x2="608.2" y2="412.6" stroke="#7e8888" stroke-width="0.6"/><line x1="617.2" y1="411" x2="617.2" y2="412.6" stroke="#7e8888" stroke-width="0.6"/><line x1="621.6" y1="411" x2="621.6" y2="412.6" stroke="#7e8888" stroke-width="0.6"/><line x1="626.1" y1="411" x2="626.1" y2="412.6" stroke="#7e8888" stroke-width="0.6"/><line x1="630.5" y1="411" x2="630.5" y2="412.6" stroke="#7e8888" stroke-width="0.6"/><line x1="635.0" y1="411" x2="635.0" y2="412.6" stroke="#7e8888" stroke-width="0.6"/><line x1="639.5" y1="411" x2="639.5" y2="412.6" stroke="#7e8888" stroke-width="0.6"/><line x1="643.9" y1="411" x2="643.9" y2="412.6" stroke="#7e8888" stroke-width="0.6"/><line x1="648.4" y1="411" x2="648.4" y2="412.6" stroke="#7e8888" stroke-width="0.6"/><line x1="652.9" y1="411" x2="652.9" y2="412.6" stroke="#7e8888" stroke-width="0.6"/><line x1="661.8" y1="411" x2="661.8" y2="412.6" stroke="#7e8888" stroke-width="0.6"/><line x1="666.2" y1="411" x2="666.2" y2="412.6" stroke="#7e8888" stroke-width="0.6"/><line x1="670.7" y1="411" x2="670.7" y2="412.6" stroke="#7e8888" stroke-width="0.6"/><line x1="675.2" y1="411" x2="675.2" y2="412.6" stroke="#7e8888" stroke-width="0.6"/><line x1="679.6" y1="411" x2="679.6" y2="412.6" stroke="#7e8888" stroke-width="0.6"/><line x1="684.1" y1="411" x2="684.1" y2="412.6" stroke="#7e8888" stroke-width="0.6"/><line x1="688.6" y1="411" x2="688.6" y2="412.6" stroke="#7e8888" stroke-width="0.6"/><line x1="693.0" y1="411" x2="693.0" y2="412.6" stroke="#7e8888" stroke-width="0.6"/><line x1="697.5" y1="411" x2="697.5" y2="412.6" stroke="#7e8888" stroke-width="0.6"/><line x1="706.4" y1="411" x2="706.4" y2="412.6" stroke="#7e8888" stroke-width="0.6"/></g>
<g font-family="'Liberation Sans',sans-serif" font-size="5.7" fill="#c4caca"><text x="713.4" y="102.6" letter-spacing="-0.15">smpl</text><text x="713.4" y="121.7" letter-spacing="-0.3">+22500</text><line x1="708.6" y1="119.6" x2="711.8" y2="119.6" stroke="#aab2b2" stroke-width="0.8"/><text x="713.4" y="139.8" letter-spacing="-0.3">+15000</text><line x1="708.6" y1="137.7" x2="711.8" y2="137.7" stroke="#aab2b2" stroke-width="0.8"/><text x="713.4" y="157.9" letter-spacing="-0.3">+7500</text><line x1="708.6" y1="155.8" x2="711.8" y2="155.8" stroke="#aab2b2" stroke-width="0.8"/><text x="713.4" y="176.1" letter-spacing="-0.3">+0</text><line x1="708.6" y1="174.0" x2="711.8" y2="174.0" stroke="#aab2b2" stroke-width="0.8"/><text x="713.4" y="194.2" letter-spacing="-0.3">-7500</text><line x1="708.6" y1="192.2" x2="711.8" y2="192.2" stroke="#aab2b2" stroke-width="0.8"/><text x="713.4" y="212.4" letter-spacing="-0.3">-15000</text><line x1="708.6" y1="210.3" x2="711.8" y2="210.3" stroke="#aab2b2" stroke-width="0.8"/><text x="713.4" y="230.5" letter-spacing="-0.3">-22500</text><line x1="708.6" y1="228.4" x2="711.8" y2="228.4" stroke="#aab2b2" stroke-width="0.8"/><line x1="708.6" y1="97.8" x2="710.2" y2="97.8" stroke="#8b9494" stroke-width="0.6"/><line x1="708.6" y1="105.0" x2="710.2" y2="105.0" stroke="#8b9494" stroke-width="0.6"/><line x1="708.6" y1="108.7" x2="710.2" y2="108.7" stroke="#8b9494" stroke-width="0.6"/><line x1="708.6" y1="112.3" x2="710.2" y2="112.3" stroke="#8b9494" stroke-width="0.6"/><line x1="708.6" y1="115.9" x2="710.2" y2="115.9" stroke="#8b9494" stroke-width="0.6"/><line x1="708.6" y1="123.2" x2="710.2" y2="123.2" stroke="#8b9494" stroke-width="0.6"/><line x1="708.6" y1="126.8" x2="710.2" y2="126.8" stroke="#8b9494" stroke-width="0.6"/><line x1="708.6" y1="130.4" x2="710.2" y2="130.4" stroke="#8b9494" stroke-width="0.6"/><line x1="708.6" y1="134.1" x2="710.2" y2="134.1" stroke="#8b9494" stroke-width="0.6"/><line x1="708.6" y1="141.3" x2="710.2" y2="141.3" stroke="#8b9494" stroke-width="0.6"/><line x1="708.6" y1="145.0" x2="710.2" y2="145.0" stroke="#8b9494" stroke-width="0.6"/><line x1="708.6" y1="148.6" x2="710.2" y2="148.6" stroke="#8b9494" stroke-width="0.6"/><line x1="708.6" y1="152.2" x2="710.2" y2="152.2" stroke="#8b9494" stroke-width="0.6"/><line x1="708.6" y1="159.5" x2="710.2" y2="159.5" stroke="#8b9494" stroke-width="0.6"/><line x1="708.6" y1="163.1" x2="710.2" y2="163.1" stroke="#8b9494" stroke-width="0.6"/><line x1="708.6" y1="166.7" x2="710.2" y2="166.7" stroke="#8b9494" stroke-width="0.6"/><line x1="708.6" y1="170.4" x2="710.2" y2="170.4" stroke="#8b9494" stroke-width="0.6"/><line x1="708.6" y1="177.6" x2="710.2" y2="177.6" stroke="#8b9494" stroke-width="0.6"/><line x1="708.6" y1="181.3" x2="710.2" y2="181.3" stroke="#8b9494" stroke-width="0.6"/><line x1="708.6" y1="184.9" x2="710.2" y2="184.9" stroke="#8b9494" stroke-width="0.6"/><line x1="708.6" y1="188.5" x2="710.2" y2="188.5" stroke="#8b9494" stroke-width="0.6"/><line x1="708.6" y1="195.8" x2="710.2" y2="195.8" stroke="#8b9494" stroke-width="0.6"/><line x1="708.6" y1="199.4" x2="710.2" y2="199.4" stroke="#8b9494" stroke-width="0.6"/><line x1="708.6" y1="203.0" x2="710.2" y2="203.0" stroke="#8b9494" stroke-width="0.6"/><line x1="708.6" y1="206.7" x2="710.2" y2="206.7" stroke="#8b9494" stroke-width="0.6"/><line x1="708.6" y1="213.9" x2="710.2" y2="213.9" stroke="#8b9494" stroke-width="0.6"/><line x1="708.6" y1="217.6" x2="710.2" y2="217.6" stroke="#8b9494" stroke-width="0.6"/><line x1="708.6" y1="221.2" x2="710.2" y2="221.2" stroke="#8b9494" stroke-width="0.6"/><line x1="708.6" y1="224.8" x2="710.2" y2="224.8" stroke="#8b9494" stroke-width="0.6"/><line x1="708.6" y1="232.1" x2="710.2" y2="232.1" stroke="#8b9494" stroke-width="0.6"/><line x1="708.6" y1="235.7" x2="710.2" y2="235.7" stroke="#8b9494" stroke-width="0.6"/><line x1="708.6" y1="239.3" x2="710.2" y2="239.3" stroke="#8b9494" stroke-width="0.6"/><line x1="708.6" y1="243.0" x2="710.2" y2="243.0" stroke="#8b9494" stroke-width="0.6"/><line x1="708.6" y1="250.2" x2="710.2" y2="250.2" stroke="#8b9494" stroke-width="0.6"/><line x1="708.6" y1="101.4" x2="711.8" y2="101.4" stroke="#aab2b2" stroke-width="0.8"/><line x1="708.6" y1="246.6" x2="711.8" y2="246.6" stroke="#aab2b2" stroke-width="0.8"/><text x="713.4" y="261.3" letter-spacing="-0.15">smpl</text><text x="713.4" y="280.4" letter-spacing="-0.3">+22500</text><line x1="708.6" y1="278.2" x2="711.8" y2="278.2" stroke="#aab2b2" stroke-width="0.8"/><text x="713.4" y="298.5" letter-spacing="-0.3">+15000</text><line x1="708.6" y1="296.4" x2="711.8" y2="296.4" stroke="#aab2b2" stroke-width="0.8"/><text x="713.4" y="316.7" letter-spacing="-0.3">+7500</text><line x1="708.6" y1="314.6" x2="711.8" y2="314.6" stroke="#aab2b2" stroke-width="0.8"/><text x="713.4" y="334.8" letter-spacing="-0.3">+0</text><line x1="708.6" y1="332.7" x2="711.8" y2="332.7" stroke="#aab2b2" stroke-width="0.8"/><text x="713.4" y="352.9" letter-spacing="-0.3">-7500</text><line x1="708.6" y1="350.8" x2="711.8" y2="350.8" stroke="#aab2b2" stroke-width="0.8"/><text x="713.4" y="371.1" letter-spacing="-0.3">-15000</text><line x1="708.6" y1="369.0" x2="711.8" y2="369.0" stroke="#aab2b2" stroke-width="0.8"/><text x="713.4" y="389.2" letter-spacing="-0.3">-22500</text><line x1="708.6" y1="387.1" x2="711.8" y2="387.1" stroke="#aab2b2" stroke-width="0.8"/><line x1="708.6" y1="256.5" x2="710.2" y2="256.5" stroke="#8b9494" stroke-width="0.6"/><line x1="708.6" y1="263.7" x2="710.2" y2="263.7" stroke="#8b9494" stroke-width="0.6"/><line x1="708.6" y1="267.4" x2="710.2" y2="267.4" stroke="#8b9494" stroke-width="0.6"/><line x1="708.6" y1="271.0" x2="710.2" y2="271.0" stroke="#8b9494" stroke-width="0.6"/><line x1="708.6" y1="274.6" x2="710.2" y2="274.6" stroke="#8b9494" stroke-width="0.6"/><line x1="708.6" y1="281.9" x2="710.2" y2="281.9" stroke="#8b9494" stroke-width="0.6"/><line x1="708.6" y1="285.5" x2="710.2" y2="285.5" stroke="#8b9494" stroke-width="0.6"/><line x1="708.6" y1="289.1" x2="710.2" y2="289.1" stroke="#8b9494" stroke-width="0.6"/><line x1="708.6" y1="292.8" x2="710.2" y2="292.8" stroke="#8b9494" stroke-width="0.6"/><line x1="708.6" y1="300.0" x2="710.2" y2="300.0" stroke="#8b9494" stroke-width="0.6"/><line x1="708.6" y1="303.7" x2="710.2" y2="303.7" stroke="#8b9494" stroke-width="0.6"/><line x1="708.6" y1="307.3" x2="710.2" y2="307.3" stroke="#8b9494" stroke-width="0.6"/><line x1="708.6" y1="310.9" x2="710.2" y2="310.9" stroke="#8b9494" stroke-width="0.6"/><line x1="708.6" y1="318.2" x2="710.2" y2="318.2" stroke="#8b9494" stroke-width="0.6"/><line x1="708.6" y1="321.8" x2="710.2" y2="321.8" stroke="#8b9494" stroke-width="0.6"/><line x1="708.6" y1="325.4" x2="710.2" y2="325.4" stroke="#8b9494" stroke-width="0.6"/><line x1="708.6" y1="329.1" x2="710.2" y2="329.1" stroke="#8b9494" stroke-width="0.6"/><line x1="708.6" y1="336.3" x2="710.2" y2="336.3" stroke="#8b9494" stroke-width="0.6"/><line x1="708.6" y1="340.0" x2="710.2" y2="340.0" stroke="#8b9494" stroke-width="0.6"/><line x1="708.6" y1="343.6" x2="710.2" y2="343.6" stroke="#8b9494" stroke-width="0.6"/><line x1="708.6" y1="347.2" x2="710.2" y2="347.2" stroke="#8b9494" stroke-width="0.6"/><line x1="708.6" y1="354.5" x2="710.2" y2="354.5" stroke="#8b9494" stroke-width="0.6"/><line x1="708.6" y1="358.1" x2="710.2" y2="358.1" stroke="#8b9494" stroke-width="0.6"/><line x1="708.6" y1="361.7" x2="710.2" y2="361.7" stroke="#8b9494" stroke-width="0.6"/><line x1="708.6" y1="365.4" x2="710.2" y2="365.4" stroke="#8b9494" stroke-width="0.6"/><line x1="708.6" y1="372.6" x2="710.2" y2="372.6" stroke="#8b9494" stroke-width="0.6"/><line x1="708.6" y1="376.3" x2="710.2" y2="376.3" stroke="#8b9494" stroke-width="0.6"/><line x1="708.6" y1="379.9" x2="710.2" y2="379.9" stroke="#8b9494" stroke-width="0.6"/><line x1="708.6" y1="383.5" x2="710.2" y2="383.5" stroke="#8b9494" stroke-width="0.6"/><line x1="708.6" y1="390.8" x2="710.2" y2="390.8" stroke="#8b9494" stroke-width="0.6"/><line x1="708.6" y1="394.4" x2="710.2" y2="394.4" stroke="#8b9494" stroke-width="0.6"/><line x1="708.6" y1="398.0" x2="710.2" y2="398.0" stroke="#8b9494" stroke-width="0.6"/><line x1="708.6" y1="401.7" x2="710.2" y2="401.7" stroke="#8b9494" stroke-width="0.6"/><line x1="708.6" y1="408.9" x2="710.2" y2="408.9" stroke="#8b9494" stroke-width="0.6"/><line x1="708.6" y1="260.1" x2="711.8" y2="260.1" stroke="#aab2b2" stroke-width="0.8"/><line x1="708.6" y1="405.3" x2="711.8" y2="405.3" stroke="#aab2b2" stroke-width="0.8"/></g>
<path d="M165.8 404.6 a4 4.3 0 0 1 0 8.6z" fill="#ffffff"/>
<line x1="704" y1="174" x2="709" y2="174" stroke="#e19401" stroke-width="1"/>
<line x1="704" y1="332.7" x2="709" y2="332.7" stroke="#e19401" stroke-width="1"/>
<g fill="none" stroke="#f4f4f4" stroke-width="1.5"><circle cx="721.3" cy="79.3" r="4.6"/><line x1="724.8" y1="83" x2="729.3" y2="87.6" stroke-width="2.6" stroke-linecap="round"/><path d="M718.8 79.3h5M721.3 76.8v5" stroke-width="1.2"/></g>
<g stroke="#313939" stroke-width="1"><line x1="738.5" y1="77" x2="738.5" y2="87"/><line x1="740.5" y1="77" x2="740.5" y2="87"/><line x1="742.5" y1="77" x2="742.5" y2="87"/></g>
</svg><div style="position:absolute;left:236.9px;top:73.9px;width:244.4px;height:286.8px;background:#c7c7c7;box-sizing:border-box;border:1px solid #cfd1d8;box-shadow:0 0 0 0.8px rgba(110,105,95,0.55);"></div><span class="t" style="left:311.74px;top:75.60px;font-size:10.2px;line-height:16px;color:#2a2a2a;font-family:'Liberation Sans',sans-serif;">Звуковой генератор</span><div style="position:absolute;left:241.4px;top:93.5px;width:234.8px;height:262.5px;background:#f0f0f0;box-shadow:0 0 0 1px #b7b7b7;"></div><div style="position:absolute;left:249.7px;top:115px;width:217.8px;height:153.3px;background:#fff;box-sizing:border-box;border:1px solid #c2c2c2;"></div><div style="position:absolute;left:249.7px;top:103.4px;width:29.5px;height:12px;box-sizing:border-box;border:1px solid #c2c2c2;border-bottom:none;background:linear-gradient(#f4f4f4,#e4e4e4);"></div><div style="position:absolute;left:363.6px;top:103.4px;width:94px;height:12px;box-sizing:border-box;border:1px solid #c2c2c2;border-bottom:none;background:linear-gradient(#f4f4f4,#e4e4e4);"></div><div style="position:absolute;left:278.7px;top:101.2px;width:85.6px;height:14.6px;box-sizing:border-box;border:1px solid #c2c2c2;border-bottom:none;background:#fff;"></div><span class="t" style="left:256.30px;top:102.90px;font-size:7.8px;line-height:13px;color:#1a1a1a;font-family:'Liberation Sans',sans-serif;letter-spacing:-0.508px;">Шум</span><span class="t" style="left:287.00px;top:102.10px;font-size:7.8px;line-height:13px;color:#1a1a1a;font-family:'Liberation Sans',sans-serif;letter-spacing:-0.205px;">Тональные сигналы</span><span class="t" style="left:371.20px;top:102.90px;font-size:7.8px;line-height:13px;color:#1a1a1a;font-family:'Liberation Sans',sans-serif;letter-spacing:-0.114px;">Двухтональный сигнал</span><div style="position:absolute;left:258.6px;top:126.7px;width:199.4px;height:50.6px;box-sizing:border-box;border:1px solid #dcdcdc;"></div><div style="position:absolute;left:262.6px;top:124px;width:33.5px;height:6px;background:#fff;"></div><span class="t" style="left:264.20px;top:120.70px;font-size:7.8px;line-height:13px;color:#1a1a1a;font-family:'Liberation Sans',sans-serif;letter-spacing:-0.059px;">Частота</span><div style="position:absolute;left:258.6px;top:186.5px;width:199.4px;height:72px;box-sizing:border-box;border:1px solid #dcdcdc;"></div><div style="position:absolute;left:262.6px;top:184px;width:42px;height:6px;background:#fff;"></div><span class="t" style="left:264.20px;top:180.50px;font-size:7.8px;line-height:13px;color:#1a1a1a;font-family:'Liberation Sans',sans-serif;letter-spacing:-0.375px;">Параметры</span><div style="position:absolute;left:290px;top:144px;width:112px;height:2.2px;background:#e7e7e7;box-sizing:border-box;border:0.5px solid #d6d6d6;"></div><div style="position:absolute;left:291.8px;top:138.1px;width:6.8px;height:13.8px;box-sizing:border-box;border:1px solid #acacac;background:#e5e5e5;"></div><div style="position:absolute;left:290px;top:162.4px;width:112px;height:2.2px;background:#e7e7e7;box-sizing:border-box;border:0.5px solid #d6d6d6;"></div><div style="position:absolute;left:291.8px;top:156.5px;width:6.8px;height:13.8px;box-sizing:border-box;border:1px solid #acacac;background:#e5e5e5;"></div><div style="position:absolute;left:406.2px;top:138.5px;width:33.4px;height:13px;box-sizing:border-box;border:1px solid #b3b5bb;background:#fff;"></div><div style="position:absolute;left:406.2px;top:157.1px;width:33.4px;height:13px;box-sizing:border-box;border:1px solid #b3b5bb;background:#fff;"></div><span class="t" style="left:416.80px;top:138.80px;font-size:7.6px;line-height:13px;color:#1a1a1a;font-family:'Liberation Sans',sans-serif;letter-spacing:-0.293px;">400</span><span class="t" style="left:416.80px;top:157.40px;font-size:7.6px;line-height:13px;color:#1a1a1a;font-family:'Liberation Sans',sans-serif;letter-spacing:-0.293px;">400</span><span class="t" style="left:443.50px;top:138.90px;font-size:7.8px;line-height:13px;color:#1a1a1a;font-family:'Liberation Sans',sans-serif;letter-spacing:-0.096px;">Гц</span><span class="t" style="left:443.50px;top:157.50px;font-size:7.8px;line-height:13px;color:#1a1a1a;font-family:'Liberation Sans',sans-serif;letter-spacing:-0.096px;">Гц</span><span class="t" style="left:264.80px;top:139.50px;font-size:7.8px;line-height:13px;color:#1a1a1a;font-family:'Liberation Sans',sans-serif;letter-spacing:-0.199px;">Старт</span><span class="t" style="left:264.80px;top:158.10px;font-size:7.8px;line-height:13px;color:#1a1a1a;font-family:'Liberation Sans',sans-serif;letter-spacing:-0.159px;">Конец</span><span class="t" style="left:264.80px;top:200.10px;font-size:7.8px;line-height:13px;color:#1a1a1a;font-family:'Liberation Sans',sans-serif;letter-spacing:-0.265px;">Разновидность</span><div style="position:absolute;left:320.5px;top:200px;width:130.8px;height:12.6px;box-sizing:border-box;border:1px solid #acacac;background:linear-gradient(#efefef,#e3e3e3);"></div><span class="t" style="left:323.30px;top:200.10px;font-size:7.8px;line-height:13px;color:#1a1a1a;font-family:'Liberation Sans',sans-serif;letter-spacing:-0.433px;">Синусоидальный</span><svg style="position:absolute;left:441px;top:203px" width="8" height="6" viewBox="0 0 8 6"><path d="M1.2 1.4h5.4l-2.7 3.2z" fill="#1a1a1a"/></svg><div style="position:absolute;left:265.2px;top:220.6px;width:8.8px;height:8.6px;box-sizing:border-box;border:1px solid #707070;background:#fff;"></div><div style="position:absolute;left:265.2px;top:237.7px;width:8.8px;height:8.6px;box-sizing:border-box;border:1px solid #707070;background:#fff;"></div><svg style="position:absolute;left:265px;top:237px" width="10" height="10" viewBox="0 0 10 10"><path d="M2.2 5l2 2.2 3.4-4.6" fill="none" stroke="#111" stroke-width="1.4"/></svg><span class="t" style="left:276.70px;top:218.60px;font-size:7.8px;line-height:13px;color:#1a1a1a;font-family:'Liberation Sans',sans-serif;letter-spacing:-0.152px;">Блокировка начальных и конечных частот</span><span class="t" style="left:276.70px;top:235.70px;font-size:7.8px;line-height:13px;color:#1a1a1a;font-family:'Liberation Sans',sans-serif;letter-spacing:-0.291px;">Пределы ослабления и усиления</span><div style="position:absolute;left:250.2px;top:277.6px;width:218.2px;height:50.6px;box-sizing:border-box;border:1px solid #dadada;"></div><div style="position:absolute;left:253.5px;top:275px;width:52.5px;height:6px;background:#f0f0f0;"></div><span class="t" style="left:255.00px;top:271.70px;font-size:7.8px;line-height:13px;color:#1a1a1a;font-family:'Liberation Sans',sans-serif;letter-spacing:-0.254px;">Конфигурация</span><span class="t" style="left:255.30px;top:290.30px;font-size:7.8px;line-height:13px;color:#1a1a1a;font-family:'Liberation Sans',sans-serif;letter-spacing:-0.248px;">Интенсивность</span><span class="t" style="left:255.30px;top:309.00px;font-size:7.8px;line-height:13px;color:#1a1a1a;font-family:'Liberation Sans',sans-serif;letter-spacing:-0.179px;">Длительность</span><div style="position:absolute;left:316.8px;top:294.6px;width:68.89999999999998px;height:2.2px;background:#e7e7e7;box-sizing:border-box;border:0.5px solid #d6d6d6;"></div><div style="position:absolute;left:373.2px;top:288.70000000000005px;width:6.8px;height:13.8px;box-sizing:border-box;border:1px solid #acacac;background:#e5e5e5;"></div><div style="position:absolute;left:316.8px;top:313.4px;width:68.89999999999998px;height:2.2px;background:#e7e7e7;box-sizing:border-box;border:0.5px solid #d6d6d6;"></div><div style="position:absolute;left:322.8px;top:307.5px;width:6.8px;height:13.8px;box-sizing:border-box;border:1px solid #acacac;background:#e5e5e5;"></div><div style="position:absolute;left:395.4px;top:289.6px;width:33.2px;height:13px;box-sizing:border-box;border:1px solid #b3b5bb;background:#fff;"></div><div style="position:absolute;left:395.4px;top:308.6px;width:33.2px;height:13px;box-sizing:border-box;border:1px solid #b3b5bb;background:#fff;"></div><span class="t" style="left:408.60px;top:289.90px;font-size:7.6px;line-height:13px;color:#1a1a1a;font-family:'Liberation Sans',sans-serif;letter-spacing:-0.179px;">-6</span><span class="t" style="left:407.90px;top:308.90px;font-size:7.6px;line-height:13px;color:#1a1a1a;font-family:'Liberation Sans',sans-serif;letter-spacing:-0.327px;">10</span><span class="t" style="left:437.90px;top:290.10px;font-size:7.8px;line-height:13px;color:#1a1a1a;font-family:'Liberation Sans',sans-serif;letter-spacing:-0.570px;">dB</span><span class="t" style="left:437.90px;top:309.10px;font-size:7.8px;line-height:13px;color:#1a1a1a;font-family:'Liberation Sans',sans-serif;letter-spacing:-0.149px;">секунд</span><div style="position:absolute;left:249.3px;top:333.7px;width:53.4px;height:14px;box-sizing:border-box;border:1px solid #acacac;background:linear-gradient(#f1f1f1,#e6e6e6 50%,#dedede);"></div><div style="position:absolute;left:310.4px;top:333.7px;width:49.6px;height:14px;box-sizing:border-box;border:1px solid #3c9be8;background:linear-gradient(#f1f4f8,#e6eaf0 50%,#dde3ea);"></div><div style="position:absolute;left:365.2px;top:333.7px;width:48.8px;height:14px;box-sizing:border-box;border:1px solid #acacac;background:linear-gradient(#f1f1f1,#e6e6e6 50%,#dedede);"></div><div style="position:absolute;left:419.6px;top:333.7px;width:48.2px;height:14px;box-sizing:border-box;border:1px solid #acacac;background:linear-gradient(#f1f1f1,#e6e6e6 50%,#dedede);"></div><span class="t" style="left:252.40px;top:334.30px;font-size:7.8px;line-height:13px;color:#1a1a1a;font-family:'Liberation Sans',sans-serif;letter-spacing:-0.462px;">По умолчанию</span><span class="t" style="left:330.50px;top:334.30px;font-size:7.8px;line-height:13px;color:#1a1a1a;font-family:'Liberation Sans',sans-serif;letter-spacing:-0.935px;">OK</span><span class="t" style="left:382.20px;top:334.30px;font-size:7.8px;line-height:13px;color:#1a1a1a;font-family:'Liberation Sans',sans-serif;letter-spacing:-0.334px;">Тест</span><span class="t" style="left:431.20px;top:334.30px;font-size:7.8px;line-height:13px;color:#1a1a1a;font-family:'Liberation Sans',sans-serif;letter-spacing:-0.498px;">Отмена</span>
</body></html>
